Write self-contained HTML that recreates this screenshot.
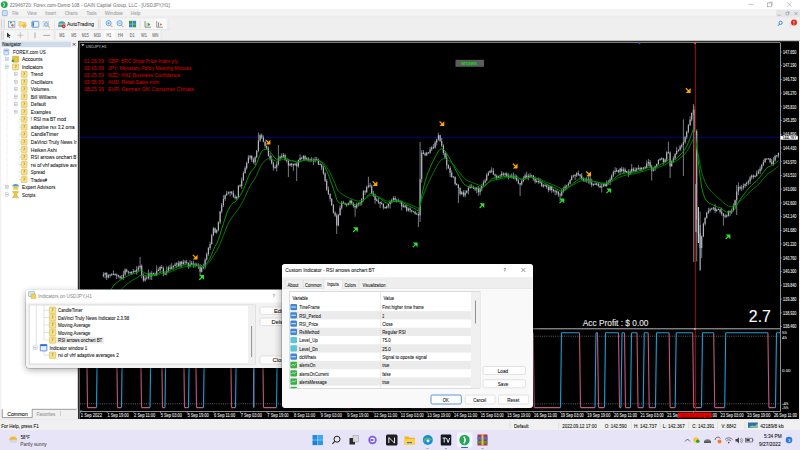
<!DOCTYPE html>
<html><head><meta charset="utf-8">
<style>
*{box-sizing:border-box}
html,body{margin:0;padding:0}
body{width:800px;height:450px;overflow:hidden;position:relative;background:#f0f0f0;font-family:"Liberation Sans",sans-serif}
.a{position:absolute}
svg text{white-space:pre;font-family:"Liberation Sans",sans-serif}
</style></head><body>
<svg class="a" style="left:0;top:0" width="800" height="450" viewBox="0 0 800 450">
<rect x="0" y="0" width="800" height="9.2" fill="#ffffff"/>
<circle cx="4.3" cy="4.6" r="3.4" fill="#22a84a"/><path d="M3.6 2.6q1.8 2 0 4" stroke="#fff" stroke-width="1" fill="none"/>
<text x="9.65" y="6.91" font-size="5.3" fill="#8c8c8c" textLength="160.10" lengthAdjust="spacingAndGlyphs" xml:space="preserve" stroke="#8c8c8c" stroke-width="0.1">22946720: Forex.com-Demo 108 - GAIN Capital Group, LLC - [USDJPY,H1]</text>
<path d="M748.5 4.4H753.5" stroke="#888" stroke-width="0.5"/><rect x="767.6" y="3" width="3.8" height="3.8" fill="none" stroke="#888" stroke-width="0.5"/><path d="M768.6 2.2H772.2V5.8" fill="none" stroke="#888" stroke-width="0.5"/><path d="M787 2.2L791.5 6.7M791.5 2.2L787 6.7" stroke="#888" stroke-width="0.5"/>
<rect x="0" y="9.2" width="800" height="7.8" fill="#f3f3f3"/>
<rect x="0" y="16.8" width="800" height="0.6" fill="#dadada"/>
<rect x="2.3" y="10.6" width="5" height="5" rx="0.6" fill="#cfe0f3" stroke="#5b8fd0" stroke-width="0.5"/>
<text x="12.15" y="15.37" font-size="5.2" fill="#a6a6a6" textLength="6.35" lengthAdjust="spacingAndGlyphs" xml:space="preserve" stroke="#a6a6a6" stroke-width="0.1">File</text>
<text x="27.15" y="15.37" font-size="5.2" fill="#a6a6a6" textLength="9.50" lengthAdjust="spacingAndGlyphs" xml:space="preserve" stroke="#a6a6a6" stroke-width="0.1">View</text>
<text x="45.25" y="15.37" font-size="5.2" fill="#a6a6a6" textLength="10.75" lengthAdjust="spacingAndGlyphs" xml:space="preserve" stroke="#a6a6a6" stroke-width="0.1">Insert</text>
<text x="64.65" y="15.37" font-size="5.2" fill="#a6a6a6" textLength="13.10" lengthAdjust="spacingAndGlyphs" xml:space="preserve" stroke="#a6a6a6" stroke-width="0.1">Charts</text>
<text x="86.50" y="15.37" font-size="5.2" fill="#a6a6a6" textLength="10.15" lengthAdjust="spacingAndGlyphs" xml:space="preserve" stroke="#a6a6a6" stroke-width="0.1">Tools</text>
<text x="104.65" y="15.37" font-size="5.2" fill="#a6a6a6" textLength="18.10" lengthAdjust="spacingAndGlyphs" xml:space="preserve" stroke="#a6a6a6" stroke-width="0.1">Window</text>
<text x="130.85" y="15.37" font-size="5.2" fill="#a6a6a6" textLength="9.50" lengthAdjust="spacingAndGlyphs" xml:space="preserve" stroke="#a6a6a6" stroke-width="0.1">Help</text>
<rect x="776" y="10" width="24" height="7" fill="#e6e6e6"/>
<path d="M777.5 15.2H781" stroke="#7a8ea8" stroke-width="0.5"/><rect x="786" y="12.4" width="2.6" height="2.6" fill="none" stroke="#7a8ea8" stroke-width="0.45"/><path d="M787 11.8H789.2V14" fill="none" stroke="#7a8ea8" stroke-width="0.45"/><path d="M794.5 12L797.5 15M797.5 12L794.5 15" stroke="#7a8ea8" stroke-width="0.6"/>
<rect x="0" y="17.4" width="800" height="23.4" fill="#efefef"/>
<rect x="5" y="18.6" width="92" height="10.6" fill="#f5f5f5"/>
<rect x="101" y="18.6" width="67" height="10.6" fill="#f5f5f5"/>
<rect x="5" y="29.9" width="48" height="10.4" fill="#f5f5f5"/>
<rect x="55" y="29.9" width="106" height="10.4" fill="#f5f5f5"/>
<rect x="104" y="30.3" width="10.5" height="10" fill="#fbfbfb"/>
<rect x="155" y="18.8" width="11" height="10.2" fill="#fbfbfb"/>
<rect x="4.3" y="30.4" width="9" height="9.6" fill="#f8f8f8"/>
<rect x="18" y="18.8" width="10.2" height="10.4" fill="#f8f8f8"/>
<path d="M1.5 19.5V28.5M4.3 19.5V28.5M1.5 31V39.5M3.4 31V39.5" stroke="#c0c0c0" stroke-width="0.6"/>
<path d="M54.5 20V28" stroke="#d4d4d4" stroke-width="0.5"/>
<path d="M140.2 20V28" stroke="#d4d4d4" stroke-width="0.5"/>
<path d="M28 31V39.5" stroke="#d4d4d4" stroke-width="0.5"/>
<path d="M55 31V39.5" stroke="#d4d4d4" stroke-width="0.5"/>
<rect x="8.3" y="21.2" width="6.6" height="6" fill="#eaf3fc" stroke="#4d8fd6" stroke-width="0.6"/><path d="M10 22.6h1.8M10.9 21.7v1.8" stroke="#2a9a2a" stroke-width="0.8"/><circle cx="12.5" cy="25.2" r="1.2" fill="#e96a3a"/>
<path d="M18.8 21.6h3l.8 1h3.4v3.4h-7.2z" fill="#f5e08a" stroke="#caa640" stroke-width="0.4"/><path d="M20.2 26.2v1.6" stroke="#9a8a60" stroke-width="0.5"/><path d="M24.3 23.6l.8 1.5 1.6.2-1.2 1.1.3 1.6-1.5-.8-1.5.8.3-1.6-1.2-1.1 1.6-.2z" fill="#f2c428" stroke="#c89a20" stroke-width="0.25"/>
<rect x="31.8" y="21.3" width="7" height="6" rx="0.6" fill="#e8f1fb" stroke="#3f82d0" stroke-width="0.7"/><rect x="32.4" y="22" width="1.6" height="4.6" fill="#3f82d0"/>
<rect x="43" y="21.2" width="5.8" height="5.2" fill="#e9eef5" stroke="#a9b8c8" stroke-width="0.4"/><circle cx="46.3" cy="24.3" r="1.8" fill="#bfe0f8" stroke="#3f82d0" stroke-width="0.5"/><path d="M47.6 25.6l2.2 2" stroke="#d9a020" stroke-width="0.9"/>
<path d="M58.2 24.5a3.6 3.2 0 0 1 7.2 0v2.6h-7.2z" fill="#3f9ad8"/><path d="M58.2 24.2h7.2" stroke="#f2c230" stroke-width="1.2"/><circle cx="63.6" cy="26.4" r="1.8" fill="#d92c2c"/><path d="M62.8 26.4h1.6" stroke="#fff" stroke-width="0.5"/>
<text x="67.05" y="25.82" font-size="5.6" fill="#2a2a2a" textLength="26.95" lengthAdjust="spacingAndGlyphs" xml:space="preserve" stroke="#2a2a2a" stroke-width="0.1">AutoTrading</text>
<path d="M98.5 19.5V28.5M100 19.5V28.5" stroke="#cfcfcf" stroke-width="0.5"/>
<circle cx="108.6" cy="23.2" r="2.6" fill="#cfe8fa" stroke="#3a86d2" stroke-width="0.6"/><path d="M107.4 23.2h2.4M108.6 22v2.4" stroke="#3a86d2" stroke-width="0.5"/><path d="M110.4 25l2 2" stroke="#d8a020" stroke-width="1"/>
<circle cx="119.6" cy="23.2" r="2.6" fill="#cfe8fa" stroke="#3a86d2" stroke-width="0.6"/><path d="M118.4 23.2h2.4" stroke="#3a86d2" stroke-width="0.5"/><path d="M121.4 25l2 2" stroke="#d8a020" stroke-width="1"/>
<rect x="129" y="20.8" width="3.4" height="3.1" fill="#2f9a3f"/><rect x="132.7" y="20.8" width="3.4" height="3.1" fill="#3a7fd0"/><rect x="129" y="24.2" width="3.4" height="3.1" fill="#3a7fd0"/><rect x="132.7" y="24.2" width="3.4" height="3.1" fill="#2f9a3f"/>
<path d="M145 21v6.2h6" stroke="#333" stroke-width="0.5" fill="none"/><path d="M147 22.5v4M148.3 23.2l1.8 1.3-1.8 1.3z" stroke="#2a9a2a" stroke-width="0.5" fill="#2a9a2a"/>
<path d="M156.7 21v6.2h6" stroke="#333" stroke-width="0.5" fill="none"/><path d="M158.6 22.3v4.4" stroke="#333" stroke-width="0.6"/><path d="M160.2 23.2l2 1.3-2 1.3z" fill="#e24a2a"/>
<path d="M7 32.4v5.2l1.3-1.2 1 1.9 0.7-.4-.9-1.8h1.8z" fill="#333"/>
<path d="M20.3 32.2v6.2M17.2 35.3h6.2" stroke="#999" stroke-width="0.5"/>
<path d="M35 32.5v5.6" stroke="#777" stroke-width="0.6"/><path d="M43.2 35.4h7" stroke="#777" stroke-width="0.6"/>
<text x="59.25" y="36.96" font-size="4.6" fill="#777" textLength="5.50" lengthAdjust="spacingAndGlyphs" xml:space="preserve" stroke="#777" stroke-width="0.1">M1</text>
<text x="71.25" y="36.96" font-size="4.6" fill="#777" textLength="5.20" lengthAdjust="spacingAndGlyphs" xml:space="preserve" stroke="#777" stroke-width="0.1">M5</text>
<text x="81.75" y="36.96" font-size="4.6" fill="#777" textLength="7.00" lengthAdjust="spacingAndGlyphs" xml:space="preserve" stroke="#777" stroke-width="0.1">M15</text>
<text x="93.75" y="36.96" font-size="4.6" fill="#777" textLength="7.00" lengthAdjust="spacingAndGlyphs" xml:space="preserve" stroke="#777" stroke-width="0.1">M30</text>
<text x="106.50" y="36.96" font-size="4.6" fill="#777" textLength="4.75" lengthAdjust="spacingAndGlyphs" xml:space="preserve" stroke="#777" stroke-width="0.1">H1</text>
<text x="117.75" y="36.96" font-size="4.6" fill="#777" textLength="5.50" lengthAdjust="spacingAndGlyphs" xml:space="preserve" stroke="#777" stroke-width="0.1">H4</text>
<text x="129.75" y="36.96" font-size="4.6" fill="#777" textLength="4.75" lengthAdjust="spacingAndGlyphs" xml:space="preserve" stroke="#777" stroke-width="0.1">D1</text>
<text x="141.00" y="36.96" font-size="4.6" fill="#777" textLength="5.95" lengthAdjust="spacingAndGlyphs" xml:space="preserve" stroke="#777" stroke-width="0.1">W1</text>
<text x="152.25" y="36.96" font-size="4.6" fill="#777" textLength="6.25" lengthAdjust="spacingAndGlyphs" xml:space="preserve" stroke="#777" stroke-width="0.1">MN</text>
<path d="M0 29.6H170M168 18.6V29.6M161 30V40.5" stroke="#dadada" stroke-width="0.5"/>
<circle cx="780.6" cy="22.8" r="1.6" fill="none" stroke="#2a6fd0" stroke-width="0.8"/><path d="M779.6 24L778 25.8" stroke="#2a6fd0" stroke-width="1"/>
<path d="M789 22.6h5v4h-3.5l-1.5 1.2z" fill="#e4e4e4"/><circle cx="794" cy="22.6" r="3" fill="#e02a20"/><path d="M794 20.8V23.4M794 24.2V24.8" stroke="#fff" stroke-width="0.7"/>
<rect x="78" y="40.8" width="722" height="378.2" fill="#000000"/>
<rect x="78" y="41" width="722" height="1" fill="#2c2c2c"/>
<rect x="78" y="42" width="702.5" height="1" fill="#7c7c7c"/>
<rect x="78" y="41" width="1" height="378" fill="#2c2c2c"/>
<rect x="79" y="42" width="1" height="377" fill="#5c5c5c"/>
<path d="M780.5 43V411.5H80" stroke="#b4b4b4" stroke-width="0.8" fill="none"/>
<path d="M80.3 328.8H780.4" stroke="#c8c8c8" stroke-width="0.9"/>
<rect x="799" y="40.8" width="1" height="378.2" fill="#ececec"/>
<path d="M80 137.6H780" stroke="#000098" stroke-width="0.9"/>
<path d="M80 336.2H780M80 403.8H780" stroke="#a0a0a0" stroke-width="0.6" stroke-dasharray="1 1.2"/>
<path d="M86.5 332.8L87.5 407.6M87.5 407.6H96.5M116.5 332.8L117.5 407.6M117.5 407.6H121.5M140.5 332.8L141.5 407.6M141.5 407.6H150.0M161.5 332.8L162.5 407.6M162.5 407.6H165.0M183.5 332.8L184.5 407.6M184.5 407.6H188.5M195.5 332.8L196.5 407.6M196.5 407.6H203.5M230.5 332.8L231.5 407.6M231.5 407.6H235.5M253.0 332.8L254.0 407.6M254.0 407.6H253.5M262.5 332.8L263.5 407.6M263.5 407.6H276.5M299.5 332.8L300.5 407.6M300.5 407.6H317.5M339.5 332.8L340.5 407.6M340.5 407.6H351.5M371.5 332.8L372.5 407.6M372.5 407.6H389.5M409.5 332.8L410.5 407.6M410.5 407.6H429.5M454.5 332.8L455.5 407.6M455.5 407.6H469.5M499.5 332.8L500.5 407.6M500.5 407.6H514.5M533.2 332.8L534.2 407.6M534.2 407.6H560.5M579.5 332.8L580.5 407.6M580.5 407.6H595.0M597.5 332.8L598.5 407.6M598.5 407.6H604.5M618.5 332.8L619.5 407.6M619.5 407.6H621.0M624.5 332.8L625.5 407.6M625.5 407.6H630.5M637.0 332.8L638.0 407.6M638.0 407.6H643.2M648.2 332.8L649.2 407.6M649.2 407.6H655.5M669.1 332.8L670.1 407.6M670.1 407.6H675.2M692.7 332.8L693.7 407.6M693.7 407.6H701.5M713.7 332.8L714.7 407.6M714.7 407.6H724.7M767.9 332.8L768.9 407.6M768.9 407.6H775.5" stroke="#c0577e" stroke-width="1.1" fill="none"/><path d="M80.0 332.8H86.5M96.5 407.6L97.5 332.8M97.5 332.8H116.5M121.5 407.6L122.5 332.8M122.5 332.8H140.5M150.0 407.6L151.0 332.8M151.0 332.8H161.5M165.0 407.6L166.0 332.8M166.0 332.8H183.5M188.5 407.6L189.5 332.8M189.5 332.8H195.5M203.5 407.6L204.5 332.8M204.5 332.8H230.5M235.5 407.6L236.5 332.8M236.5 332.8H253.0M253.5 407.6L254.5 332.8M254.5 332.8H262.5M276.5 407.6L277.5 332.8M277.5 332.8H299.5M317.5 407.6L318.5 332.8M318.5 332.8H339.5M351.5 407.6L352.5 332.8M352.5 332.8H371.5M389.5 407.6L390.5 332.8M390.5 332.8H409.5M429.5 407.6L430.5 332.8M430.5 332.8H454.5M469.5 407.6L470.5 332.8M470.5 332.8H499.5M514.5 407.6L515.5 332.8M515.5 332.8H533.2M560.5 407.6L561.5 332.8M561.5 332.8H579.5M595.0 407.6L596.0 332.8M596.0 332.8H597.5M604.5 407.6L605.5 332.8M605.5 332.8H618.5M621.0 407.6L622.0 332.8M622.0 332.8H624.5M630.5 407.6L631.5 332.8M631.5 332.8H637.0M643.2 407.6L644.2 332.8M644.2 332.8H648.2M655.5 407.6L656.5 332.8M656.5 332.8H669.1M675.2 407.6L676.2 332.8M676.2 332.8H692.7M701.5 407.6L702.5 332.8M702.5 332.8H713.7M724.7 407.6L725.7 332.8M725.7 332.8H767.9M775.5 407.6L776.5 332.8M776.5 332.8H780" stroke="#1c9fd6" stroke-width="1.1" fill="none"/>
<path d="M103.4 272.2V277.5M105.1 272.3V278.4M106.7 272.2V280.0M108.4 274.2V278.4M110.1 274.3V277.7M111.7 273.2V275.6M113.4 270.4V275.3M115.1 273.5V275.9M116.7 273.6V279.0M118.4 274.7V277.7M120.1 275.4V279.5M121.7 275.1V279.1M123.4 270.7V279.7M125.1 268.3V275.9M126.7 268.6V272.6M128.4 270.7V274.5M130.1 271.5V274.1M131.7 271.1V275.0M133.4 269.0V272.9M135.1 270.3V272.0M136.7 266.2V274.6M138.4 265.7V271.5M140.1 257.0V269.6M141.7 264.4V278.3M143.4 273.4V281.9M145.1 275.1V281.5M146.7 276.1V279.6M148.4 269.4V279.5M150.1 272.2V279.7M151.7 271.1V280.0M153.4 272.5V274.7M155.1 272.6V276.1M156.7 265.3V276.0M158.4 267.8V271.2M160.1 265.8V273.0M161.7 264.9V269.1M163.4 266.5V276.2M165.1 272.3V275.2M166.7 266.5V275.5M168.4 265.7V272.1M170.1 264.6V269.7M171.7 263.2V269.2M173.4 265.3V269.6M175.1 262.7V266.7M176.7 262.2V268.1M178.4 260.7V267.1M180.1 261.3V267.6M181.7 260.7V267.4M183.4 259.7V264.8M185.1 260.2V264.9M186.7 259.8V263.9M188.4 262.2V268.9M190.1 260.2V267.8M191.7 261.0V264.8M193.4 260.7V267.8M195.1 262.5V267.7M196.7 262.8V266.2M198.4 263.2V269.0M200.1 263.9V276.0M201.7 265.0V272.5M203.4 263.6V269.4M205.1 258.4V269.3M206.7 252.5V260.6M208.4 246.8V255.8M210.1 241.7V250.1M211.7 233.8V244.7M213.4 227.1V236.1M215.1 227.5V233.3M216.7 229.3V233.7M218.4 221.4V231.4M220.1 210.8V224.2M221.7 203.0V213.4M223.4 195.2V207.0M225.1 194.4V201.0M226.7 191.0V195.9M228.4 191.3V194.3M230.1 191.3V196.1M231.7 191.0V194.8M233.4 190.4V197.7M235.1 194.6V199.6M236.7 195.9V199.6M238.4 185.2V198.0M240.1 184.1V187.2M241.7 177.6V188.8M243.4 171.4V180.9M245.1 166.2V173.8M246.7 161.6V169.6M248.4 155.2V163.6M250.1 155.0V159.7M251.7 155.2V161.8M253.4 157.7V163.8M255.1 156.2V165.4M256.7 150.1V158.3M258.4 132.5V152.3M260.1 133.9V142.1M261.7 133.4V139.0M263.4 135.3V142.3M265.1 141.2V147.9M266.7 145.3V149.4M268.4 146.5V156.6M270.1 153.2V160.7M271.7 155.4V164.7M273.4 161.6V170.6M275.1 165.2V168.9M276.7 161.7V171.4M278.4 145.0V165.7M280.1 155.5V160.1M281.7 153.4V158.5M283.4 153.0V157.6M285.1 153.8V160.8M286.7 159.1V162.6M288.4 159.1V177.0M290.1 163.0V166.4M291.7 162.9V167.1M293.4 163.6V170.9M295.1 163.1V166.0M296.7 162.4V181.0M298.4 159.4V167.6M300.1 154.3V161.8M301.7 156.8V159.4M303.4 155.1V160.1M305.1 154.9V159.9M306.7 157.1V160.3M308.4 157.1V161.6M310.1 158.3V162.4M311.7 157.1V161.8M313.4 158.3V165.1M315.1 156.8V162.5M316.7 156.9V160.3M318.4 158.5V165.0M320.1 162.4V165.3M321.7 163.7V170.1M323.4 165.8V174.8M325.1 172.2V182.0M326.7 179.1V191.1M328.4 186.5V195.0M330.1 193.3V201.5M331.7 198.2V206.2M333.4 204.1V213.6M335.1 211.3V216.8M336.7 213.5V234.0M338.4 213.8V226.4M340.1 205.4V215.9M341.7 200.8V209.7M343.4 200.8V203.9M345.1 202.4V205.0M346.7 203.4V206.7M348.4 202.6V205.5M350.1 199.6V204.7M351.7 199.5V204.2M353.4 202.3V207.6M355.1 204.9V216.7M356.7 202.6V208.7M358.4 202.4V206.6M360.1 201.6V205.9M361.7 198.0V205.4M363.4 190.1V201.5M365.1 190.1V194.9M366.7 185.7V192.8M368.4 176.7V188.2M370.1 182.7V187.5M371.7 184.5V194.3M373.4 190.7V196.9M375.1 193.6V203.7M376.7 198.3V201.3M378.4 197.7V203.8M380.1 201.6V207.9M381.7 201.2V204.7M383.4 203.3V209.4M385.1 206.6V208.6M386.7 205.3V208.8M388.4 203.6V208.3M390.1 200.4V208.5M391.7 198.8V203.5M393.4 196.3V201.7M395.1 195.9V201.8M396.7 198.7V202.6M398.4 198.5V202.2M400.1 200.2V203.8M401.7 200.7V210.4M403.4 204.0V207.6M405.1 204.6V208.2M406.7 205.0V211.7M408.4 207.5V211.6M410.1 207.3V212.5M411.7 209.7V212.7M413.4 210.7V212.6M415.1 210.7V214.8M416.7 212.7V214.6M418.4 211.8V227.0M420.1 142.0V222.0M421.7 150.2V182.7M423.4 150.0V154.3M425.1 152.4V156.3M426.7 151.8V155.9M428.4 152.1V153.9M430.1 147.0V153.8M431.7 146.2V150.9M433.4 144.1V149.0M435.1 140.8V148.6M436.7 138.7V145.5M438.4 132.7V140.6M440.1 134.7V141.9M441.7 138.0V147.1M443.4 144.2V154.9M445.1 151.0V158.7M446.7 153.6V169.7M448.4 164.2V169.0M450.1 166.2V177.1M451.7 170.3V177.8M453.4 176.0V178.2M455.1 176.3V185.5M456.7 183.0V185.6M458.4 183.9V203.0M460.1 187.2V195.6M461.7 191.0V194.9M463.4 190.2V196.9M465.1 190.3V197.4M466.7 190.0V193.6M468.4 186.4V194.3M470.1 184.3V188.8M471.7 184.2V188.2M473.4 185.7V189.2M475.1 187.5V191.1M476.7 187.0V193.2M478.4 186.0V195.8M480.1 186.6V195.3M481.7 184.2V191.2M483.4 180.4V186.6M485.1 178.7V183.7M486.7 173.2V181.2M488.4 171.2V176.0M490.1 169.9V173.3M491.7 167.4V172.7M493.4 168.2V175.1M495.1 173.5V177.9M496.7 174.5V180.1M498.4 175.6V178.3M500.1 174.3V178.6M501.7 171.1V177.0M503.4 172.4V176.1M505.1 172.7V176.8M506.7 172.3V177.0M508.4 173.3V179.5M510.1 174.5V177.8M511.7 173.5V178.4M513.4 172.6V179.1M515.1 174.1V179.7M516.7 175.0V181.5M518.4 179.1V184.2M520.1 182.9V196.0M521.7 180.0V185.7M523.4 176.2V182.3M525.1 173.4V179.1M526.7 171.7V178.7M528.4 173.8V180.2M530.1 173.1V177.8M531.7 174.6V176.9M533.4 174.8V180.6M535.1 176.4V183.6M536.7 178.3V182.8M538.4 177.6V183.8M540.1 178.2V183.7M541.7 181.2V187.1M543.4 183.9V187.7M545.1 183.6V186.8M546.7 184.5V188.9M548.4 184.8V192.2M550.1 185.6V191.1M551.7 185.5V192.8M553.4 188.7V192.4M555.1 189.7V195.3M556.7 190.1V194.9M558.4 191.1V196.9M560.1 192.7V201.0M561.7 189.2V196.5M563.4 186.6V192.8M565.1 184.5V190.8M566.7 184.8V189.5M568.4 182.2V186.8M570.1 179.2V184.5M571.7 175.0V180.5M573.4 174.5V177.6M575.1 174.1V180.0M576.7 172.1V177.1M578.4 170.5V175.9M580.1 174.2V178.0M581.7 173.1V180.3M583.4 177.3V181.7M585.1 177.7V181.8M586.7 177.1V182.8M588.4 174.7V183.7M590.1 175.7V184.6M591.7 178.5V187.1M593.4 183.7V186.2M595.1 182.5V185.0M596.7 182.8V185.6M598.4 182.2V187.3M600.1 183.7V188.1M601.7 183.9V192.5M603.4 183.2V186.9M605.1 183.3V186.8M606.7 180.3V186.9M608.4 179.9V184.7M610.1 177.5V185.2M611.7 174.3V180.4M613.4 170.4V177.0M615.1 167.2V174.4M616.7 167.9V171.8M618.4 169.8V173.4M620.1 167.9V175.2M621.7 166.7V172.4M623.4 167.3V173.2M625.1 167.6V173.0M626.7 171.0V173.1M628.4 169.3V176.9M630.1 169.5V174.9M631.7 164.0V173.3M633.4 167.4V171.9M635.1 167.3V172.1M636.7 167.6V171.8M638.4 165.2V169.9M640.1 166.9V171.5M641.7 167.0V171.2M643.4 167.2V169.0M645.1 166.0V168.8M646.7 160.5V168.2M648.4 159.0V166.0M650.1 160.0V167.0M651.7 164.8V180.5M653.4 167.4V171.6M655.1 165.6V170.9M656.7 163.6V167.5M658.4 159.3V164.9M660.1 158.0V161.0M661.7 157.3V160.1M663.4 157.9V164.6M665.1 158.5V162.8M666.7 151.2V161.8M668.4 141.7V153.9M670.1 151.3V178.0M671.7 160.6V166.8M673.4 156.3V163.0M675.1 152.9V159.9M676.7 146.8V154.7M678.4 149.2V151.9M680.1 145.1V151.1M681.7 143.5V148.4M683.4 119.4V176.0M685.1 135.9V143.7M686.7 130.8V139.2M688.4 124.0V133.2M690.1 116.3V126.0M691.7 112.5V121.5M693.4 103.9V115.1M695.1 108.7V131.8M696.7 129.3V261.5M698.4 217.8V235.7M700.1 211.6V270.8M701.7 235.5V258.0M703.4 222.5V237.1M705.1 217.1V225.7M706.7 211.8V218.7M708.4 207.8V214.1M710.1 207.7V212.5M711.7 207.8V210.1M713.4 206.8V210.3M715.1 204.0V213.0M716.7 208.8V211.6M718.4 208.3V210.1M720.1 208.7V213.4M721.7 207.5V215.6M723.4 212.9V225.7M725.1 213.9V218.3M726.7 214.5V217.6M728.4 210.5V216.6M730.1 210.2V216.2M731.7 208.6V213.9M733.4 203.2V211.3M735.1 199.6V208.7M736.7 185.0V215.0M738.4 182.3V195.2M740.1 185.8V190.3M741.7 185.0V190.9M743.4 183.5V189.7M745.1 183.4V187.9M746.7 181.5V186.3M748.4 179.6V185.0M750.1 175.8V184.0M751.7 174.7V179.4M753.4 174.4V178.9M755.1 174.9V177.6M756.7 170.6V176.6M758.4 169.4V174.2M760.1 166.5V174.2M761.7 164.0V170.5M763.4 159.6V166.1M765.1 158.0V163.2M766.7 158.3V160.0M768.4 158.0V159.8M770.1 157.9V163.3M771.7 158.7V165.1M773.4 157.0V165.5M775.1 154.7V161.7M776.7 155.0V157.5M778.4 152.4V157.9" stroke="#767c84" stroke-width="1.0" fill="none"/>
<path d="M103.4 274.5V276.0M105.1 273.0V274.5M106.7 273.0V277.4M108.4 275.3V277.4M110.1 274.6V275.7M111.7 274.3V275.4M113.4 273.8V275.1M115.1 273.8V275.0M116.7 274.6V275.4M118.4 275.0V276.6M120.1 276.2V278.0M121.7 277.4V278.4M123.4 274.6V277.8M125.1 269.8V274.6M126.7 269.8V271.8M128.4 271.4V272.4M130.1 272.0V273.0M131.7 271.9V273.4M133.4 271.1V272.3M135.1 270.7V271.9M136.7 269.6V271.5M138.4 267.5V269.6M140.1 265.7V267.5M141.7 265.7V275.5M143.4 275.5V280.6M145.1 278.2V280.6M146.7 277.8V278.6M148.4 273.5V278.2M150.1 273.5V276.6M151.7 273.4V276.6M153.4 273.0V274.2M155.1 273.8V275.2M156.7 270.5V275.2M158.4 269.8V270.9M160.1 266.9V270.2M161.7 266.9V268.1M163.4 268.1V274.0M165.1 272.8V274.4M166.7 270.7V273.2M168.4 267.4V270.7M170.1 267.4V268.7M171.7 266.7V268.7M173.4 265.7V267.1M175.1 264.4V266.1M176.7 263.2V264.4M178.4 263.2V266.1M180.1 261.8V266.1M181.7 261.8V263.9M183.4 262.2V263.9M185.1 261.6V262.6M186.7 262.0V263.0M188.4 263.0V266.2M190.1 264.1V266.2M191.7 263.0V264.5M193.4 263.4V264.6M195.1 264.2V265.4M196.7 264.6V265.8M198.4 265.0V266.5M200.1 266.1V271.8M201.7 267.4V271.8M203.4 266.6V267.4M205.1 259.8V266.6M206.7 253.9V259.8M208.4 248.0V253.9M210.1 244.0V248.0M211.7 235.2V244.0M213.4 228.3V235.2M215.1 228.3V232.5M216.7 230.0V232.5M218.4 222.3V230.0M220.1 211.6V222.3M221.7 205.0V211.6M223.4 198.9V205.0M225.1 195.2V198.9M226.7 193.4V195.2M228.4 192.3V193.4M230.1 191.7V192.7M231.7 191.7V193.3M233.4 192.9V196.7M235.1 196.7V198.0M236.7 197.0V198.4M238.4 185.8V197.4M240.1 185.4V186.4M241.7 180.3V186.0M243.4 173.0V180.3M245.1 168.2V173.0M246.7 162.9V168.2M248.4 157.5V162.9M250.1 156.1V157.5M251.7 156.1V159.6M253.4 159.6V162.2M255.1 157.3V162.2M256.7 150.7V157.3M258.4 140.4V150.7M260.1 135.3V140.4M261.7 135.3V137.4M263.4 137.4V141.8M265.1 141.8V146.1M266.7 146.1V148.4M268.4 148.4V155.7M270.1 155.7V159.1M271.7 159.1V163.3M273.4 163.3V167.5M275.1 167.1V168.0M276.7 164.2V167.6M278.4 158.8V164.2M280.1 156.8V158.8M281.7 156.1V157.2M283.4 155.0V156.5M285.1 155.0V159.8M286.7 159.8V160.8M288.4 160.8V165.6M290.1 164.0V165.6M291.7 163.6V164.9M293.4 164.1V165.4M295.1 163.8V165.0M296.7 163.8V166.3M298.4 160.1V166.3M300.1 158.1V160.1M301.7 157.7V158.8M303.4 155.9V158.4M305.1 155.9V159.2M306.7 158.3V159.6M308.4 158.7V160.5M310.1 159.4V160.9M311.7 159.4V160.9M313.4 160.5V161.3M315.1 159.3V161.3M316.7 158.9V160.2M318.4 159.8V164.4M320.1 164.0V165.1M321.7 164.7V167.5M323.4 167.5V173.6M325.1 173.6V180.8M326.7 180.8V189.4M328.4 189.4V194.1M330.1 194.1V198.8M331.7 198.8V204.9M333.4 204.9V212.8M335.1 212.8V215.4M336.7 215.4V225.4M338.4 214.9V225.4M340.1 207.8V214.9M341.7 202.4V207.8M343.4 202.4V203.3M345.1 203.3V204.3M346.7 203.9V205.3M348.4 203.1V204.9M350.1 200.7V203.1M351.7 200.7V203.5M353.4 203.5V206.0M355.1 206.0V207.5M356.7 204.3V207.5M358.4 203.0V204.3M360.1 202.4V203.4M361.7 199.3V202.8M363.4 191.2V199.3M365.1 191.2V192.2M366.7 187.1V192.2M368.4 185.6V187.1M370.1 185.2V186.6M371.7 186.2V193.6M373.4 193.6V195.8M375.1 195.8V200.0M376.7 199.6V201.0M378.4 200.6V202.4M380.1 202.0V203.4M381.7 203.0V204.1M383.4 204.1V207.5M385.1 207.1V208.3M386.7 206.3V207.9M388.4 204.1V206.3M390.1 201.4V204.1M391.7 200.1V201.4M393.4 197.9V200.1M395.1 197.9V200.1M396.7 200.1V201.5M398.4 200.5V201.9M400.1 200.9V201.8M401.7 201.8V206.6M403.4 205.6V207.0M405.1 205.6V207.2M406.7 206.8V210.6M408.4 208.5V210.6M410.1 208.5V210.2M411.7 210.2V211.6M413.4 211.2V212.1M415.1 211.7V213.8M416.7 213.4V214.4M418.4 214.0V215.4M420.1 179.1V215.4M421.7 152.8V179.1M423.4 152.4V153.9M425.1 153.5V155.2M426.7 152.7V155.2M428.4 152.3V153.2M430.1 149.4V152.8M431.7 147.6V149.4M433.4 147.1V148.0M435.1 142.6V147.5M436.7 139.4V142.6M438.4 135.3V139.4M440.1 135.3V141.0M441.7 141.0V145.6M443.4 145.6V153.0M445.1 153.0V157.6M446.7 157.6V165.3M448.4 165.3V168.1M450.1 168.1V172.7M451.7 172.7V176.9M453.4 176.5V177.3M455.1 176.9V184.0M456.7 184.0V185.1M458.4 185.1V188.0M460.1 188.0V193.9M461.7 192.2V193.9M463.4 192.2V195.5M465.1 192.7V195.5M466.7 191.0V192.7M468.4 188.1V191.0M470.1 186.7V188.1M471.7 186.7V187.6M473.4 187.6V188.6M475.1 188.2V189.6M476.7 187.9V189.2M478.4 187.9V192.2M480.1 189.2V192.2M481.7 186.0V189.2M483.4 182.5V186.0M485.1 180.4V182.5M486.7 174.9V180.4M488.4 172.8V174.9M490.1 171.0V172.8M491.7 170.6V171.7M493.4 171.3V174.5M495.1 174.5V175.7M496.7 175.7V177.7M498.4 176.2V177.7M500.1 175.4V176.2M501.7 173.4V175.4M503.4 173.4V174.8M505.1 173.5V174.8M506.7 173.5V176.1M508.4 175.7V177.2M510.1 176.4V177.6M511.7 175.8V177.2M513.4 175.8V178.4M515.1 176.3V178.4M516.7 176.3V180.6M518.4 180.6V183.5M520.1 183.1V184.7M521.7 180.9V184.3M523.4 177.9V180.9M525.1 175.5V177.9M526.7 175.5V177.0M528.4 176.0V177.4M530.1 175.5V176.8M531.7 175.4V176.3M533.4 175.8V178.9M535.1 178.9V181.5M536.7 181.1V181.9M538.4 181.1V181.9M540.1 181.5V182.7M541.7 182.7V186.2M543.4 185.2V186.6M545.1 185.0V186.0M546.7 185.4V186.9M548.4 186.9V190.1M550.1 186.2V190.1M551.7 186.2V189.9M553.4 189.5V190.9M555.1 190.5V191.5M556.7 191.1V192.5M558.4 192.1V194.5M560.1 194.5V195.5M561.7 191.2V195.5M563.4 189.3V191.2M565.1 186.4V189.3M566.7 185.5V186.4M568.4 183.8V185.5M570.1 179.9V183.8M571.7 176.6V179.9M573.4 175.4V176.6M575.1 175.0V175.9M576.7 173.2V175.5M578.4 173.2V174.7M580.1 174.3V175.9M581.7 175.5V179.0M583.4 179.0V180.9M585.1 180.4V181.3M586.7 179.2V180.8M588.4 178.8V179.8M590.1 179.4V182.5M591.7 182.5V184.7M593.4 183.8V185.1M595.1 183.8V184.7M596.7 183.6V184.7M598.4 184.0V186.1M600.1 186.1V187.5M601.7 186.2V187.5M603.4 184.1V186.2M605.1 184.1V186.1M606.7 182.2V186.1M608.4 181.8V182.8M610.1 179.5V182.4M611.7 175.4V179.5M613.4 172.0V175.4M615.1 171.1V172.0M616.7 169.9V171.5M618.4 170.3V172.1M620.1 168.7V172.1M621.7 168.7V171.1M623.4 169.5V171.1M625.1 169.5V172.1M626.7 171.3V172.5M628.4 171.7V173.6M630.1 171.4V173.6M631.7 168.8V171.4M633.4 168.8V170.8M635.1 169.8V171.2M636.7 168.4V170.2M638.4 168.0V168.9M640.1 168.1V169.5M641.7 168.0V169.1M643.4 167.6V168.5M645.1 167.3V168.5M646.7 163.6V167.7M648.4 161.9V163.6M650.1 161.9V166.5M651.7 166.5V170.8M653.4 168.5V170.8M655.1 166.2V168.5M656.7 164.1V166.2M658.4 160.1V164.1M660.1 158.9V160.1M661.7 158.2V159.3M663.4 158.6V162.0M665.1 159.5V162.0M666.7 152.3V159.5M668.4 151.9V152.9M670.1 152.5V166.2M671.7 161.2V166.2M673.4 158.6V161.2M675.1 154.0V158.6M676.7 150.9V154.0M678.4 150.1V150.9M680.1 146.6V150.1M681.7 145.1V146.6M683.4 142.3V145.1M685.1 137.2V142.3M686.7 131.4V137.2M688.4 125.3V131.4M690.1 119.6V125.3M691.7 113.1V119.6M693.4 109.9V113.1M695.1 109.9V131.1M696.7 131.1V219.5M698.4 219.5V233.6M700.1 233.6V247.9M701.7 236.2V247.9M703.4 223.7V236.2M705.1 217.9V223.7M706.7 212.7V217.9M708.4 210.8V212.7M710.1 209.3V210.8M711.7 208.4V209.3M713.4 207.4V208.8M715.1 207.8V211.0M716.7 209.4V211.0M718.4 209.0V209.8M720.1 209.4V211.8M721.7 211.8V213.8M723.4 213.8V215.9M725.1 215.5V216.8M726.7 215.3V216.8M728.4 211.3V215.7M730.1 211.3V212.6M731.7 210.7V212.6M733.4 206.1V210.7M735.1 200.2V206.1M736.7 191.6V200.2M738.4 186.9V191.6M740.1 186.9V188.4M741.7 187.6V188.4M743.4 186.0V187.6M745.1 183.9V186.0M746.7 182.8V183.9M748.4 181.2V182.8M750.1 177.6V181.2M751.7 175.5V177.6M753.4 175.5V177.0M755.1 176.1V177.0M756.7 173.2V176.1M758.4 171.2V173.2M760.1 168.7V171.2M761.7 165.1V168.7M763.4 161.9V165.1M765.1 158.8V161.9M766.7 158.4V159.3M768.4 158.4V159.3M770.1 158.8V162.1M771.7 162.1V164.1M773.4 160.4V164.1M775.1 155.9V160.4M776.7 155.3V156.3M778.4 153.0V155.7" stroke="#b4bac2" stroke-width="1.1" fill="none"/>
<path d="M693.8 106V262" stroke="#8a9098" stroke-width="1"/><path d="M698.4 207V243" stroke="#d0d4d8" stroke-width="1.1"/><path d="M700.2 225V270" stroke="#9aa0a8" stroke-width="1"/>
<polyline points="103.4,310.4 105.1,304.1 106.7,299.0 108.4,294.8 110.1,291.4 111.7,288.4 113.4,286.0 115.1,284.0 116.7,282.6 118.4,281.4 120.1,280.3 121.7,279.3 123.4,278.3 125.1,277.3 126.7,276.4 128.4,275.5 130.1,274.7 131.7,274.1 133.4,273.7 135.1,273.3 136.7,272.7 138.4,271.7 140.1,270.5 141.7,270.9 143.4,272.1 145.1,273.1 146.7,273.7 148.4,274.1 150.1,274.4 151.7,274.5 153.4,274.6 155.1,274.6 156.7,274.1 158.4,273.4 160.1,272.3 161.7,271.8 163.4,271.7 165.1,271.9 166.7,271.8 168.4,271.3 170.1,270.5 171.7,269.6 173.4,268.7 175.1,267.9 176.7,267.1 178.4,266.5 180.1,265.8 181.7,265.4 183.4,265.1 185.1,264.9 186.7,264.8 188.4,264.8 190.1,264.8 191.7,264.8 193.4,264.8 195.1,264.7 196.7,265.0 198.4,265.7 200.1,266.5 201.7,266.8 203.4,266.5 205.1,265.4 206.7,263.3 208.4,260.8 210.1,258.1 211.7,254.2 213.4,249.8 215.1,246.3 216.7,243.5 218.4,239.6 220.1,234.5 221.7,229.1 223.4,223.6 225.1,218.4 226.7,213.5 228.4,209.6 230.1,206.6 231.7,204.4 233.4,202.9 235.1,201.9 236.7,200.5 238.4,198.0 240.1,195.6 241.7,192.9 243.4,189.4 245.1,185.4 246.7,180.8 248.4,176.6 250.1,173.1 251.7,170.7 253.4,168.9 255.1,166.7 256.7,163.5 258.4,158.8 260.1,154.5 261.7,151.4 263.4,149.8 265.1,149.3 266.7,149.3 268.4,150.2 270.1,151.9 271.7,153.9 273.4,156.1 275.1,158.2 276.7,159.4 278.4,159.2 280.1,158.7 281.7,157.9 283.4,157.4 285.1,157.5 286.7,158.3 288.4,159.7 290.1,160.4 291.7,160.7 293.4,161.1 295.1,161.7 296.7,162.5 298.4,162.5 300.1,161.8 301.7,161.0 303.4,160.1 305.1,159.8 306.7,159.9 308.4,160.1 310.1,160.3 311.7,160.4 313.4,160.4 315.1,160.2 316.7,160.2 318.4,160.5 320.1,161.3 321.7,162.5 323.4,164.2 325.1,167.2 326.7,171.0 328.4,174.8 330.1,179.1 331.7,183.9 333.4,188.8 335.1,193.7 336.7,199.5 338.4,202.4 340.1,203.2 341.7,203.3 343.4,203.6 345.1,203.9 346.7,204.1 348.4,204.1 350.1,203.9 351.7,204.0 353.4,204.3 355.1,204.7 356.7,204.7 358.4,204.2 360.1,203.4 361.7,202.3 363.4,200.8 365.1,199.0 366.7,196.9 368.4,194.8 370.1,193.7 371.7,193.5 373.4,194.0 375.1,194.9 376.7,196.1 378.4,197.3 380.1,198.4 381.7,199.6 383.4,201.0 385.1,202.4 386.7,203.1 388.4,203.2 390.1,202.9 391.7,202.3 393.4,201.7 395.1,201.3 396.7,201.1 398.4,201.2 400.1,201.6 401.7,202.3 403.4,203.0 405.1,203.9 406.7,204.8 408.4,205.6 410.1,206.4 411.7,207.3 413.4,208.1 415.1,208.9 416.7,210.0 418.4,211.3 420.1,205.4 421.7,195.7 423.4,188.1 425.1,181.7 426.7,176.3 428.4,171.7 430.1,167.6 431.7,164.0 433.4,160.6 435.1,157.4 436.7,154.2 438.4,151.0 440.1,149.3 441.7,148.9 443.4,149.5 445.1,151.1 446.7,153.6 448.4,156.4 450.1,159.2 451.7,162.2 453.4,165.4 455.1,168.7 456.7,171.9 458.4,175.0 460.1,178.0 461.7,180.8 463.4,183.4 465.1,185.0 466.7,186.0 468.4,186.6 470.1,186.9 471.7,187.0 473.4,187.2 475.1,187.5 476.7,187.9 478.4,188.3 480.1,188.6 481.7,188.2 483.4,187.3 485.1,185.9 486.7,184.3 488.4,182.4 490.1,180.3 491.7,179.1 493.4,178.4 495.1,178.2 496.7,178.0 498.4,177.7 500.1,177.4 501.7,177.1 503.4,176.8 505.1,176.4 506.7,176.3 508.4,176.2 510.1,176.2 511.7,176.3 513.4,176.4 515.1,176.6 516.7,177.2 518.4,178.0 520.1,179.1 521.7,179.5 523.4,179.5 525.1,179.1 526.7,178.4 528.4,177.6 530.1,177.3 531.7,177.2 533.4,177.5 535.1,178.0 536.7,178.6 538.4,179.5 540.1,180.5 541.7,181.5 543.4,182.4 545.1,183.3 546.7,184.2 548.4,185.0 550.1,185.9 551.7,186.6 553.4,187.4 555.1,188.1 556.7,189.0 558.4,190.0 560.1,191.0 561.7,191.3 563.4,190.9 565.1,190.0 566.7,188.9 568.4,187.6 570.1,186.2 571.7,184.7 573.4,183.2 575.1,181.8 576.7,180.5 578.4,179.3 580.1,178.7 581.7,178.5 583.4,178.7 585.1,179.1 586.7,179.5 588.4,180.0 590.1,180.4 591.7,180.9 593.4,181.3 595.1,181.8 596.7,182.2 598.4,182.7 600.1,183.2 601.7,183.7 603.4,183.9 605.1,183.8 606.7,183.4 608.4,182.8 610.1,182.0 611.7,180.9 613.4,179.4 615.1,177.7 616.7,176.3 618.4,175.3 620.1,174.5 621.7,173.8 623.4,173.4 625.1,173.0 626.7,172.8 628.4,172.7 630.1,172.7 631.7,172.5 633.4,172.2 635.1,171.9 636.7,171.5 638.4,171.0 640.1,170.5 641.7,170.1 643.4,169.6 645.1,169.1 646.7,168.2 648.4,167.2 650.1,167.4 651.7,167.8 653.4,167.8 655.1,167.5 656.7,166.8 658.4,165.8 660.1,164.7 661.7,163.9 663.4,163.4 665.1,162.6 666.7,161.0 668.4,159.7 670.1,160.8 671.7,161.1 673.4,160.6 675.1,159.5 676.7,158.0 678.4,156.5 680.1,155.0 681.7,153.3 683.4,151.4 685.1,149.0 686.7,146.1 688.4,142.5 690.1,138.3 691.7,133.6 693.4,129.1 695.1,129.7 696.7,146.0 698.4,161.7 700.1,176.8 701.7,187.4 703.4,194.2 705.1,198.4 706.7,201.0 708.4,202.6 710.1,203.6 711.7,204.3 713.4,205.1 715.1,206.0 716.7,206.7 718.4,207.3 720.1,207.8 721.7,208.9 723.4,210.3 725.1,211.4 726.7,212.0 728.4,212.2 730.1,212.0 731.7,211.6 733.4,210.7 735.1,208.5 736.7,205.3 738.4,202.3 740.1,199.7 741.7,197.4 743.4,195.1 745.1,192.9 746.7,190.7 748.4,188.7 750.1,186.8 751.7,185.2 753.4,183.6 755.1,182.1 756.7,180.7 758.4,179.0 760.1,176.9 761.7,174.6 763.4,172.3 765.1,170.1 766.7,168.1 768.4,166.8 770.1,166.2 771.7,165.7 773.4,164.7 775.1,163.3 776.7,161.9 778.4,160.6" fill="none" stroke="#00a800" stroke-width="0.9"/>
<polyline points="103.4,320.7 105.1,316.0 106.7,311.8 108.4,308.0 110.1,304.7 111.7,301.6 113.4,298.7 115.1,296.3 116.7,294.1 118.4,292.3 120.1,290.5 121.7,288.8 123.4,287.2 125.1,285.7 126.7,284.3 128.4,283.0 130.1,281.7 131.7,280.6 133.4,279.7 135.1,278.9 136.7,277.9 138.4,276.8 140.1,275.6 141.7,275.2 143.4,275.5 145.1,275.7 146.7,275.8 148.4,275.8 150.1,275.8 151.7,275.7 153.4,275.6 155.1,275.5 156.7,275.2 158.4,274.6 160.1,273.9 161.7,273.4 163.4,273.2 165.1,273.2 166.7,272.9 168.4,272.5 170.1,272.0 171.7,271.3 173.4,270.6 175.1,269.9 176.7,269.3 178.4,268.6 180.1,268.1 181.7,267.6 183.4,267.1 185.1,266.8 186.7,266.6 188.4,266.4 190.1,266.2 191.7,266.1 193.4,265.9 195.1,265.8 196.7,265.8 198.4,266.1 200.1,266.6 201.7,266.7 203.4,266.6 205.1,265.9 206.7,264.7 208.4,263.1 210.1,261.2 211.7,258.7 213.4,255.7 215.1,253.0 216.7,250.7 218.4,247.7 220.1,243.9 221.7,239.7 223.4,235.4 225.1,231.2 226.7,227.0 228.4,223.3 230.1,220.2 231.7,217.5 233.4,215.2 235.1,213.3 236.7,211.3 238.4,208.7 240.1,206.2 241.7,203.5 243.4,200.4 245.1,196.9 246.7,193.0 248.4,189.3 250.1,186.0 251.7,183.2 253.4,180.8 255.1,178.3 256.7,175.3 258.4,171.3 260.1,167.5 261.7,164.3 263.4,162.1 265.1,160.5 266.7,159.3 268.4,158.8 270.1,158.8 271.7,159.3 273.4,160.0 275.1,160.8 276.7,161.2 278.4,160.9 280.1,160.4 281.7,159.8 283.4,159.3 285.1,159.1 286.7,159.5 288.4,160.1 290.1,160.5 291.7,160.7 293.4,160.9 295.1,161.3 296.7,161.8 298.4,161.8 300.1,161.5 301.7,161.1 303.4,160.5 305.1,160.3 306.7,160.3 308.4,160.4 310.1,160.5 311.7,160.5 313.4,160.5 315.1,160.4 316.7,160.3 318.4,160.5 320.1,161.0 321.7,161.7 323.4,162.8 325.1,164.7 326.7,167.2 328.4,169.8 330.1,172.7 331.7,176.2 333.4,179.8 335.1,183.7 336.7,188.0 338.4,190.9 340.1,192.6 341.7,193.8 343.4,194.9 345.1,196.1 346.7,197.0 348.4,197.7 350.1,198.3 351.7,199.0 353.4,199.7 355.1,200.4 356.7,200.8 358.4,201.0 360.1,200.8 361.7,200.4 363.4,199.8 365.1,198.9 366.7,197.6 368.4,196.3 370.1,195.6 371.7,195.3 373.4,195.3 375.1,195.8 376.7,196.3 378.4,197.0 380.1,197.7 381.7,198.5 383.4,199.4 385.1,200.4 386.7,201.0 388.4,201.3 390.1,201.3 391.7,201.1 393.4,200.9 395.1,200.8 396.7,200.7 398.4,200.8 400.1,201.0 401.7,201.5 403.4,202.0 405.1,202.6 406.7,203.3 408.4,203.9 410.1,204.6 411.7,205.2 413.4,205.9 415.1,206.7 416.7,207.5 418.4,208.5 420.1,205.4 421.7,199.8 423.4,195.0 425.1,190.5 426.7,186.5 428.4,182.7 430.1,179.2 431.7,175.9 433.4,172.7 435.1,169.6 436.7,166.4 438.4,163.3 440.1,161.0 441.7,159.5 443.4,158.8 445.1,158.7 446.7,159.4 448.4,160.4 450.1,161.6 451.7,163.1 453.4,164.8 455.1,166.8 456.7,168.8 458.4,171.0 460.1,173.1 461.7,175.3 463.4,177.3 465.1,178.9 466.7,180.1 468.4,181.1 470.1,181.8 471.7,182.4 473.4,183.0 475.1,183.7 476.7,184.3 478.4,184.9 480.1,185.4 481.7,185.5 483.4,185.3 485.1,184.7 486.7,183.9 488.4,182.8 490.1,181.6 491.7,180.7 493.4,180.2 495.1,179.9 496.7,179.6 498.4,179.3 500.1,178.9 501.7,178.6 503.4,178.2 505.1,177.9 506.7,177.6 508.4,177.4 510.1,177.3 511.7,177.3 513.4,177.2 515.1,177.3 516.7,177.5 518.4,178.0 520.1,178.6 521.7,178.9 523.4,178.9 525.1,178.8 526.7,178.4 528.4,178.0 530.1,177.7 531.7,177.7 533.4,177.8 535.1,178.0 536.7,178.4 538.4,178.9 540.1,179.6 541.7,180.2 543.4,180.9 545.1,181.6 546.7,182.3 548.4,183.0 550.1,183.7 551.7,184.3 553.4,185.0 555.1,185.7 556.7,186.4 558.4,187.3 560.1,188.2 561.7,188.6 563.4,188.7 565.1,188.4 566.7,187.9 568.4,187.3 570.1,186.5 571.7,185.6 573.4,184.6 575.1,183.7 576.7,182.7 578.4,181.8 580.1,181.2 581.7,180.8 583.4,180.7 585.1,180.7 586.7,180.8 588.4,180.9 590.1,181.1 591.7,181.3 593.4,181.5 595.1,181.7 596.7,182.0 598.4,182.3 600.1,182.6 601.7,183.0 603.4,183.1 605.1,183.2 606.7,183.0 608.4,182.7 610.1,182.3 611.7,181.6 613.4,180.7 615.1,179.5 616.7,178.6 618.4,177.7 620.1,177.0 621.7,176.3 623.4,175.8 625.1,175.4 626.7,175.0 628.4,174.7 630.1,174.5 631.7,174.2 633.4,173.9 635.1,173.5 636.7,173.1 638.4,172.7 640.1,172.2 641.7,171.7 643.4,171.3 645.1,170.9 646.7,170.1 648.4,169.4 650.1,169.2 651.7,169.3 653.4,169.1 655.1,168.8 656.7,168.2 658.4,167.5 660.1,166.7 661.7,166.0 663.4,165.5 665.1,164.8 666.7,163.7 668.4,162.6 670.1,163.0 671.7,162.9 673.4,162.4 675.1,161.6 676.7,160.5 678.4,159.4 680.1,158.2 681.7,156.9 683.4,155.4 685.1,153.6 686.7,151.4 688.4,148.8 690.1,145.7 691.7,142.2 693.4,138.7 695.1,138.0 696.7,146.6 698.4,155.6 700.1,165.0 701.7,172.4 703.4,177.9 705.1,182.1 706.7,185.2 708.4,187.9 710.1,190.0 711.7,191.8 713.4,193.6 715.1,195.3 716.7,196.9 718.4,198.3 720.1,199.5 721.7,201.0 723.4,202.6 725.1,204.1 726.7,205.2 728.4,206.0 730.1,206.6 731.7,206.9 733.4,206.9 735.1,206.0 736.7,204.4 738.4,202.8 740.1,201.2 741.7,199.7 743.4,198.2 745.1,196.6 746.7,194.9 748.4,193.3 750.1,191.7 751.7,190.2 753.4,188.8 755.1,187.4 756.7,186.0 758.4,184.5 760.1,182.7 761.7,180.7 763.4,178.8 765.1,176.8 766.7,175.0 768.4,173.5 770.1,172.4 771.7,171.5 773.4,170.3 775.1,168.9 776.7,167.5 778.4,166.1" fill="none" stroke="#008800" stroke-width="0.9"/>
<path d="M695.5 43V411.2" stroke="#a00000" stroke-width="1"/><path d="M696 184V232" stroke="#c8a0a8" stroke-width="1.2"/>
<path d="M693.6 42.8h2.8l-1.4 1.6z" fill="#ff6060"/><path d="M638 42.8h3l-1.5 1.8z" fill="#2040ff"/><circle cx="695" cy="328.8" r="0.9" fill="#ffd0d0"/>
<path d="M192.40 255.30L193.30 254.40L195.60 256.70L197.60 254.80V259.60H192.80L194.70 257.60z" fill="#ffa500"/><path d="M265.20 140.30L266.10 139.40L268.40 141.70L270.40 139.80V144.60H265.60L267.50 142.60z" fill="#ffa500"/><path d="M372.20 181.80L373.10 180.90L375.40 183.20L377.40 181.30V186.10H372.60L374.50 184.10z" fill="#ffa500"/><path d="M439.10 121.80L440.00 120.90L442.30 123.20L444.30 121.30V126.10H439.50L441.40 124.10z" fill="#ffa500"/><path d="M512.40 164.10L513.30 163.20L515.60 165.50L517.60 163.60V168.40H512.80L514.70 166.40z" fill="#ffa500"/><path d="M585.80 171.90L586.70 171.00L589.00 173.30L591.00 171.40V176.20H586.20L588.10 174.20z" fill="#ffa500"/><path d="M685.40 88.60L686.30 87.70L688.60 90.00L690.60 88.10V92.90H685.80L687.70 90.90z" fill="#ffa500"/><path d="M198.80 279.30L199.70 280.20L202.00 277.90L204.00 279.80V275.00H199.20L201.10 277.00z" fill="#30e030"/><path d="M352.70 231.50L353.60 232.40L355.90 230.10L357.90 232.00V227.20H353.10L355.00 229.20z" fill="#30e030"/><path d="M412.40 246.70L413.30 247.60L415.60 245.30L417.60 247.20V242.40H412.80L414.70 244.40z" fill="#30e030"/><path d="M479.15 207.50L480.05 208.40L482.35 206.10L484.35 208.00V203.20H479.55L481.45 205.20z" fill="#30e030"/><path d="M559.10 202.70L560.00 203.60L562.30 201.30L564.30 203.20V198.40H559.50L561.40 200.40z" fill="#30e030"/><path d="M606.00 192.70L606.90 193.60L609.20 191.30L611.20 193.20V188.40H606.40L608.30 190.40z" fill="#30e030"/><path d="M725.20 238.70L726.10 239.60L728.40 237.30L730.40 239.20V234.40H725.60L727.50 236.40z" fill="#30e030"/>
<path d="M80 410h2.4l-1.2 1.6z" fill="#3050ff"/>
<path d="M780.4 51.9H782" stroke="#b4b4b4" stroke-width="0.6"/>
<text x="783.05" y="53.70" font-size="5.0" fill="#e4e4e4" textLength="13.30" lengthAdjust="spacingAndGlyphs" xml:space="preserve" stroke="#e4e4e4" stroke-width="0.1">147.650</text>
<path d="M780.4 65.6H782" stroke="#b4b4b4" stroke-width="0.6"/>
<text x="783.05" y="67.43" font-size="5.0" fill="#e4e4e4" textLength="13.30" lengthAdjust="spacingAndGlyphs" xml:space="preserve" stroke="#e4e4e4" stroke-width="0.1">147.190</text>
<path d="M780.4 79.4H782" stroke="#b4b4b4" stroke-width="0.6"/>
<text x="783.05" y="81.16" font-size="5.0" fill="#e4e4e4" textLength="13.30" lengthAdjust="spacingAndGlyphs" xml:space="preserve" stroke="#e4e4e4" stroke-width="0.1">146.730</text>
<path d="M780.4 93.1H782" stroke="#b4b4b4" stroke-width="0.6"/>
<text x="783.05" y="94.89" font-size="5.0" fill="#e4e4e4" textLength="13.30" lengthAdjust="spacingAndGlyphs" xml:space="preserve" stroke="#e4e4e4" stroke-width="0.1">146.270</text>
<path d="M780.4 106.8H782" stroke="#b4b4b4" stroke-width="0.6"/>
<text x="783.05" y="108.62" font-size="5.0" fill="#e4e4e4" textLength="13.30" lengthAdjust="spacingAndGlyphs" xml:space="preserve" stroke="#e4e4e4" stroke-width="0.1">145.810</text>
<path d="M780.4 120.6H782" stroke="#b4b4b4" stroke-width="0.6"/>
<text x="783.05" y="122.35" font-size="5.0" fill="#e4e4e4" textLength="13.30" lengthAdjust="spacingAndGlyphs" xml:space="preserve" stroke="#e4e4e4" stroke-width="0.1">145.350</text>
<path d="M780.4 134.3H782" stroke="#b4b4b4" stroke-width="0.6"/>
<text x="783.05" y="136.08" font-size="5.0" fill="#e4e4e4" textLength="13.30" lengthAdjust="spacingAndGlyphs" xml:space="preserve" stroke="#e4e4e4" stroke-width="0.1">144.890</text>
<path d="M780.4 148.0H782" stroke="#b4b4b4" stroke-width="0.6"/>
<text x="783.05" y="149.81" font-size="5.0" fill="#e4e4e4" textLength="13.30" lengthAdjust="spacingAndGlyphs" xml:space="preserve" stroke="#e4e4e4" stroke-width="0.1">144.430</text>
<path d="M780.4 161.7H782" stroke="#b4b4b4" stroke-width="0.6"/>
<text x="783.05" y="163.54" font-size="5.0" fill="#e4e4e4" textLength="13.30" lengthAdjust="spacingAndGlyphs" xml:space="preserve" stroke="#e4e4e4" stroke-width="0.1">143.970</text>
<path d="M780.4 175.5H782" stroke="#b4b4b4" stroke-width="0.6"/>
<text x="783.05" y="177.27" font-size="5.0" fill="#e4e4e4" textLength="13.30" lengthAdjust="spacingAndGlyphs" xml:space="preserve" stroke="#e4e4e4" stroke-width="0.1">143.510</text>
<path d="M780.4 189.2H782" stroke="#b4b4b4" stroke-width="0.6"/>
<text x="783.05" y="191.00" font-size="5.0" fill="#e4e4e4" textLength="13.30" lengthAdjust="spacingAndGlyphs" xml:space="preserve" stroke="#e4e4e4" stroke-width="0.1">143.060</text>
<path d="M780.4 202.9H782" stroke="#b4b4b4" stroke-width="0.6"/>
<text x="783.05" y="204.73" font-size="5.0" fill="#e4e4e4" textLength="13.30" lengthAdjust="spacingAndGlyphs" xml:space="preserve" stroke="#e4e4e4" stroke-width="0.1">142.600</text>
<path d="M780.4 216.7H782" stroke="#b4b4b4" stroke-width="0.6"/>
<text x="783.05" y="218.46" font-size="5.0" fill="#e4e4e4" textLength="13.30" lengthAdjust="spacingAndGlyphs" xml:space="preserve" stroke="#e4e4e4" stroke-width="0.1">142.140</text>
<path d="M780.4 230.4H782" stroke="#b4b4b4" stroke-width="0.6"/>
<text x="783.05" y="232.19" font-size="5.0" fill="#e4e4e4" textLength="13.30" lengthAdjust="spacingAndGlyphs" xml:space="preserve" stroke="#e4e4e4" stroke-width="0.1">141.680</text>
<path d="M780.4 244.1H782" stroke="#b4b4b4" stroke-width="0.6"/>
<text x="783.05" y="245.92" font-size="5.0" fill="#e4e4e4" textLength="13.30" lengthAdjust="spacingAndGlyphs" xml:space="preserve" stroke="#e4e4e4" stroke-width="0.1">141.220</text>
<path d="M780.4 257.9H782" stroke="#b4b4b4" stroke-width="0.6"/>
<text x="783.05" y="259.65" font-size="5.0" fill="#e4e4e4" textLength="13.30" lengthAdjust="spacingAndGlyphs" xml:space="preserve" stroke="#e4e4e4" stroke-width="0.1">140.760</text>
<path d="M780.4 271.6H782" stroke="#b4b4b4" stroke-width="0.6"/>
<text x="783.05" y="273.38" font-size="5.0" fill="#e4e4e4" textLength="13.30" lengthAdjust="spacingAndGlyphs" xml:space="preserve" stroke="#e4e4e4" stroke-width="0.1">140.300</text>
<path d="M780.4 285.3H782" stroke="#b4b4b4" stroke-width="0.6"/>
<text x="783.05" y="287.11" font-size="5.0" fill="#e4e4e4" textLength="13.30" lengthAdjust="spacingAndGlyphs" xml:space="preserve" stroke="#e4e4e4" stroke-width="0.1">139.840</text>
<path d="M780.4 299.0H782" stroke="#b4b4b4" stroke-width="0.6"/>
<text x="783.05" y="300.84" font-size="5.0" fill="#e4e4e4" textLength="13.30" lengthAdjust="spacingAndGlyphs" xml:space="preserve" stroke="#e4e4e4" stroke-width="0.1">139.380</text>
<path d="M780.4 312.8H782" stroke="#b4b4b4" stroke-width="0.6"/>
<text x="783.05" y="314.57" font-size="5.0" fill="#e4e4e4" textLength="13.30" lengthAdjust="spacingAndGlyphs" xml:space="preserve" stroke="#e4e4e4" stroke-width="0.1">138.920</text>
<path d="M780.4 326.5H782" stroke="#b4b4b4" stroke-width="0.6"/>
<text x="783.05" y="328.30" font-size="5.0" fill="#e4e4e4" textLength="13.30" lengthAdjust="spacingAndGlyphs" xml:space="preserve" stroke="#e4e4e4" stroke-width="0.1">138.460</text>
<rect x="780.4" y="135.8" width="17.4" height="3.9" fill="#ffffff"/>
<text x="782.45" y="139.28" font-size="4.4" fill="#1a1a1a" textLength="13.90" lengthAdjust="spacingAndGlyphs" xml:space="preserve" stroke="#1a1a1a" stroke-width="0.1">144.787</text>
<text x="782.00" y="333.88" font-size="4.4" fill="#d4d4d4" xml:space="preserve" stroke="#d4d4d4" stroke-width="0.1">55</text>
<text x="782.00" y="338.58" font-size="4.4" fill="#d4d4d4" xml:space="preserve" stroke="#d4d4d4" stroke-width="0.1">45</text>
<text x="782.00" y="371.58" font-size="4.4" fill="#d4d4d4" xml:space="preserve" stroke="#d4d4d4" stroke-width="0.1">0.00</text>
<text x="782.00" y="405.28" font-size="4.4" fill="#d4d4d4" xml:space="preserve" stroke="#d4d4d4" stroke-width="0.1">-45</text>
<text x="782.00" y="409.18" font-size="4.4" fill="#d4d4d4" xml:space="preserve" stroke="#d4d4d4" stroke-width="0.1">-55</text>
<path d="M80.5 411.2V413" stroke="#b4b4b4" stroke-width="0.6"/>
<text x="80.75" y="416.80" font-size="5.0" fill="#e4e4e4" textLength="21.20" lengthAdjust="spacingAndGlyphs" xml:space="preserve" stroke="#e4e4e4" stroke-width="0.1">1 Sep 2022</text>
<path d="M107.2 411.2V413" stroke="#b4b4b4" stroke-width="0.6"/>
<text x="107.41" y="416.80" font-size="5.0" fill="#e4e4e4" textLength="21.20" lengthAdjust="spacingAndGlyphs" xml:space="preserve" stroke="#e4e4e4" stroke-width="0.1">1 Sep 19:00</text>
<path d="M133.8 411.2V413" stroke="#b4b4b4" stroke-width="0.6"/>
<text x="134.07" y="416.80" font-size="5.0" fill="#e4e4e4" textLength="21.20" lengthAdjust="spacingAndGlyphs" xml:space="preserve" stroke="#e4e4e4" stroke-width="0.1">2 Sep 11:00</text>
<path d="M160.5 411.2V413" stroke="#b4b4b4" stroke-width="0.6"/>
<text x="160.73" y="416.80" font-size="5.0" fill="#e4e4e4" textLength="21.20" lengthAdjust="spacingAndGlyphs" xml:space="preserve" stroke="#e4e4e4" stroke-width="0.1">5 Sep 03:00</text>
<path d="M187.1 411.2V413" stroke="#b4b4b4" stroke-width="0.6"/>
<text x="187.39" y="416.80" font-size="5.0" fill="#e4e4e4" textLength="21.20" lengthAdjust="spacingAndGlyphs" xml:space="preserve" stroke="#e4e4e4" stroke-width="0.1">5 Sep 19:00</text>
<path d="M213.8 411.2V413" stroke="#b4b4b4" stroke-width="0.6"/>
<text x="214.05" y="416.80" font-size="5.0" fill="#e4e4e4" textLength="21.20" lengthAdjust="spacingAndGlyphs" xml:space="preserve" stroke="#e4e4e4" stroke-width="0.1">6 Sep 11:00</text>
<path d="M240.5 411.2V413" stroke="#b4b4b4" stroke-width="0.6"/>
<text x="240.71" y="416.80" font-size="5.0" fill="#e4e4e4" textLength="21.20" lengthAdjust="spacingAndGlyphs" xml:space="preserve" stroke="#e4e4e4" stroke-width="0.1">7 Sep 03:00</text>
<path d="M267.1 411.2V413" stroke="#b4b4b4" stroke-width="0.6"/>
<text x="267.37" y="416.80" font-size="5.0" fill="#e4e4e4" textLength="21.20" lengthAdjust="spacingAndGlyphs" xml:space="preserve" stroke="#e4e4e4" stroke-width="0.1">7 Sep 19:00</text>
<path d="M293.8 411.2V413" stroke="#b4b4b4" stroke-width="0.6"/>
<text x="294.03" y="416.80" font-size="5.0" fill="#e4e4e4" textLength="21.20" lengthAdjust="spacingAndGlyphs" xml:space="preserve" stroke="#e4e4e4" stroke-width="0.1">8 Sep 11:00</text>
<path d="M320.4 411.2V413" stroke="#b4b4b4" stroke-width="0.6"/>
<text x="320.69" y="416.80" font-size="5.0" fill="#e4e4e4" textLength="21.20" lengthAdjust="spacingAndGlyphs" xml:space="preserve" stroke="#e4e4e4" stroke-width="0.1">9 Sep 03:00</text>
<path d="M347.1 411.2V413" stroke="#b4b4b4" stroke-width="0.6"/>
<text x="347.35" y="416.80" font-size="5.0" fill="#e4e4e4" textLength="21.20" lengthAdjust="spacingAndGlyphs" xml:space="preserve" stroke="#e4e4e4" stroke-width="0.1">9 Sep 19:00</text>
<path d="M373.8 411.2V413" stroke="#b4b4b4" stroke-width="0.6"/>
<text x="374.01" y="416.80" font-size="5.0" fill="#e4e4e4" textLength="23.10" lengthAdjust="spacingAndGlyphs" xml:space="preserve" stroke="#e4e4e4" stroke-width="0.1">12 Sep 11:00</text>
<path d="M400.4 411.2V413" stroke="#b4b4b4" stroke-width="0.6"/>
<text x="400.67" y="416.80" font-size="5.0" fill="#e4e4e4" textLength="23.10" lengthAdjust="spacingAndGlyphs" xml:space="preserve" stroke="#e4e4e4" stroke-width="0.1">13 Sep 03:00</text>
<path d="M427.1 411.2V413" stroke="#b4b4b4" stroke-width="0.6"/>
<text x="427.33" y="416.80" font-size="5.0" fill="#e4e4e4" textLength="23.10" lengthAdjust="spacingAndGlyphs" xml:space="preserve" stroke="#e4e4e4" stroke-width="0.1">13 Sep 19:00</text>
<path d="M453.7 411.2V413" stroke="#b4b4b4" stroke-width="0.6"/>
<text x="453.99" y="416.80" font-size="5.0" fill="#e4e4e4" textLength="23.10" lengthAdjust="spacingAndGlyphs" xml:space="preserve" stroke="#e4e4e4" stroke-width="0.1">14 Sep 11:00</text>
<path d="M480.4 411.2V413" stroke="#b4b4b4" stroke-width="0.6"/>
<text x="480.65" y="416.80" font-size="5.0" fill="#e4e4e4" textLength="23.10" lengthAdjust="spacingAndGlyphs" xml:space="preserve" stroke="#e4e4e4" stroke-width="0.1">15 Sep 03:00</text>
<path d="M507.1 411.2V413" stroke="#b4b4b4" stroke-width="0.6"/>
<text x="507.31" y="416.80" font-size="5.0" fill="#e4e4e4" textLength="23.10" lengthAdjust="spacingAndGlyphs" xml:space="preserve" stroke="#e4e4e4" stroke-width="0.1">15 Sep 19:00</text>
<path d="M533.7 411.2V413" stroke="#b4b4b4" stroke-width="0.6"/>
<text x="533.97" y="416.80" font-size="5.0" fill="#e4e4e4" textLength="23.10" lengthAdjust="spacingAndGlyphs" xml:space="preserve" stroke="#e4e4e4" stroke-width="0.1">16 Sep 11:00</text>
<path d="M560.4 411.2V413" stroke="#b4b4b4" stroke-width="0.6"/>
<text x="560.63" y="416.80" font-size="5.0" fill="#e4e4e4" textLength="23.10" lengthAdjust="spacingAndGlyphs" xml:space="preserve" stroke="#e4e4e4" stroke-width="0.1">19 Sep 03:00</text>
<path d="M587.0 411.2V413" stroke="#b4b4b4" stroke-width="0.6"/>
<text x="587.29" y="416.80" font-size="5.0" fill="#e4e4e4" textLength="23.10" lengthAdjust="spacingAndGlyphs" xml:space="preserve" stroke="#e4e4e4" stroke-width="0.1">19 Sep 19:00</text>
<path d="M613.7 411.2V413" stroke="#b4b4b4" stroke-width="0.6"/>
<text x="613.95" y="416.80" font-size="5.0" fill="#e4e4e4" textLength="23.10" lengthAdjust="spacingAndGlyphs" xml:space="preserve" stroke="#e4e4e4" stroke-width="0.1">20 Sep 11:00</text>
<path d="M640.4 411.2V413" stroke="#b4b4b4" stroke-width="0.6"/>
<text x="640.61" y="416.80" font-size="5.0" fill="#e4e4e4" textLength="23.10" lengthAdjust="spacingAndGlyphs" xml:space="preserve" stroke="#e4e4e4" stroke-width="0.1">21 Sep 03:00</text>
<path d="M667.0 411.2V413" stroke="#b4b4b4" stroke-width="0.6"/>
<text x="667.27" y="416.80" font-size="5.0" fill="#e4e4e4" textLength="23.10" lengthAdjust="spacingAndGlyphs" xml:space="preserve" stroke="#e4e4e4" stroke-width="0.1">21 Sep 19:00</text>
<path d="M693.7 411.2V413" stroke="#b4b4b4" stroke-width="0.6"/>
<text x="693.93" y="416.80" font-size="5.0" fill="#e4e4e4" textLength="23.10" lengthAdjust="spacingAndGlyphs" xml:space="preserve" stroke="#e4e4e4" stroke-width="0.1">22 Sep 11:00</text>
<path d="M720.3 411.2V413" stroke="#b4b4b4" stroke-width="0.6"/>
<text x="720.59" y="416.80" font-size="5.0" fill="#e4e4e4" textLength="23.10" lengthAdjust="spacingAndGlyphs" xml:space="preserve" stroke="#e4e4e4" stroke-width="0.1">23 Sep 03:00</text>
<path d="M747.0 411.2V413" stroke="#b4b4b4" stroke-width="0.6"/>
<text x="747.25" y="416.80" font-size="5.0" fill="#e4e4e4" textLength="23.10" lengthAdjust="spacingAndGlyphs" xml:space="preserve" stroke="#e4e4e4" stroke-width="0.1">23 Sep 19:00</text>
<path d="M773.7 411.2V413" stroke="#b4b4b4" stroke-width="0.6"/>
<text x="773.91" y="416.80" font-size="5.0" fill="#e4e4e4" textLength="23.10" lengthAdjust="spacingAndGlyphs" xml:space="preserve" stroke="#e4e4e4" stroke-width="0.1">26 Sep 11:00</text>
<rect x="678" y="412.7" width="33.6" height="4.9" fill="#f00000"/>
<text x="680.25" y="416.68" font-size="4.4" fill="#a00000" textLength="29.00" lengthAdjust="spacingAndGlyphs" xml:space="preserve" stroke="#a00000" stroke-width="0.1">2022.09.22 11:00</text>
<path d="M81.2 44.3h3.2l-1.6 1.9z" fill="#e0e0e0"/>
<text x="85.75" y="47.75" font-size="4.3" fill="#c8ccd0" textLength="21.00" lengthAdjust="spacingAndGlyphs" xml:space="preserve">USDJPY,H1</text>
<text x="84.00" y="63.24" font-size="5.4" fill="#c00000" textLength="19.75" lengthAdjust="spacingAndGlyphs" xml:space="preserve" stroke="#c00000" stroke-width="0.1">01:26:39</text>
<text x="108.00" y="63.24" font-size="5.4" fill="#c00000" textLength="69.55" lengthAdjust="spacingAndGlyphs" xml:space="preserve" stroke="#c00000" stroke-width="0.1">GBP: BRC Shop Price Index y/y</text>
<text x="84.00" y="70.44" font-size="5.4" fill="#c00000" textLength="19.75" lengthAdjust="spacingAndGlyphs" xml:space="preserve" stroke="#c00000" stroke-width="0.1">02:15:39</text>
<text x="108.00" y="70.44" font-size="5.4" fill="#c00000" textLength="83.50" lengthAdjust="spacingAndGlyphs" xml:space="preserve" stroke="#c00000" stroke-width="0.1">JPY: Monetary Policy Meeting Minutes</text>
<text x="84.00" y="77.19" font-size="5.4" fill="#c00000" textLength="19.75" lengthAdjust="spacingAndGlyphs" xml:space="preserve" stroke="#c00000" stroke-width="0.1">02:25:39</text>
<text x="108.00" y="77.19" font-size="5.4" fill="#c00000" textLength="71.95" lengthAdjust="spacingAndGlyphs" xml:space="preserve" stroke="#c00000" stroke-width="0.1">NZD: ANZ Business Confidence</text>
<text x="84.00" y="84.34" font-size="5.4" fill="#c00000" textLength="19.75" lengthAdjust="spacingAndGlyphs" xml:space="preserve" stroke="#c00000" stroke-width="0.1">03:55:39</text>
<text x="108.00" y="84.34" font-size="5.4" fill="#c00000" textLength="51.25" lengthAdjust="spacingAndGlyphs" xml:space="preserve" stroke="#c00000" stroke-width="0.1">AUD: Retail Sales m/m</text>
<text x="84.00" y="91.44" font-size="5.4" fill="#c00000" textLength="19.75" lengthAdjust="spacingAndGlyphs" xml:space="preserve" stroke="#c00000" stroke-width="0.1">08:25:39</text>
<text x="108.00" y="91.44" font-size="5.4" fill="#c00000" textLength="85.75" lengthAdjust="spacingAndGlyphs" xml:space="preserve" stroke="#c00000" stroke-width="0.1">EUR: German GfK Consumer Climate</text>
<rect x="455.5" y="59.8" width="28.5" height="7" fill="#5c5c5c"/>
<text x="461.25" y="64.96" font-size="4.6" fill="#00e000" textLength="15.50" lengthAdjust="spacingAndGlyphs" xml:space="preserve" stroke="#00e000" stroke-width="0.1">arrows</text>
<text x="582.75" y="326.15" font-size="8.2" fill="#e8e8e8" textLength="65.75" lengthAdjust="spacingAndGlyphs" xml:space="preserve" stroke="#e8e8e8" stroke-width="0.1">Acc Profit : $ 0.00</text>
<text x="748.85" y="322.19" font-size="15.8" fill="#ffffff" textLength="22.00" lengthAdjust="spacingAndGlyphs" xml:space="preserve" stroke="#ffffff" stroke-width="0.1">2.7</text>
<rect x="0" y="40.8" width="78" height="378.2" fill="#f0f0f0"/>
<rect x="1.3" y="41.7" width="69.6" height="5.7" fill="#cddbeb"/>
<text x="2.25" y="46.27" font-size="5.2" fill="#1e1e1e" textLength="18.80" lengthAdjust="spacingAndGlyphs" xml:space="preserve" stroke="#1e1e1e" stroke-width="0.1">Navigator</text>
<path d="M72.9 43.2l2.4 2.4M75.3 43.2l-2.4 2.4" stroke="#222" stroke-width="0.7"/>
<rect x="1.3" y="47.4" width="75.8" height="362" fill="#ffffff"/>
<rect x="77" y="47.4" width="0.7" height="362" fill="#c4c4c4"/>
<defs><clipPath id="navclip"><rect x="0" y="47" width="76.6" height="360"/></clipPath></defs><g clip-path="url(#navclip)">
<path d="M7 62V194.6M15.8 70V112M19 115V179.6" stroke="#c8c8c8" stroke-width="0.5" stroke-dasharray="0.6 0.6" fill="none"/>
<rect x="3.9" y="49" width="4.8" height="5.8" rx="0.5" fill="#dbe8f7" stroke="#5a92d2" stroke-width="0.5"/><rect x="4.6" y="50.3" width="3.4" height="1" fill="#5a92d2"/>
<text x="13.05" y="54.19" font-size="5.8" fill="#1e1e1e" textLength="32.60" lengthAdjust="spacingAndGlyphs" xml:space="preserve" stroke="#1e1e1e" stroke-width="0.1">FOREX.com US</text>
<rect x="5.3" y="57.400000000000006" width="3.4" height="3.4" fill="#fafafa" stroke="#9aaec4" stroke-width="0.4"/><path d="M6 59.1h2" stroke="#333" stroke-width="0.35"/>
<rect x="12.5" y="56.2" width="6.2" height="6" rx="0.6" fill="#e8c040" stroke="#b08a20" stroke-width="0.4"/><circle cx="12.9" cy="60.800000000000004" r="1.3" fill="#30b030"/>
<text x="21.95" y="61.29" font-size="5.8" fill="#1e1e1e" textLength="20.50" lengthAdjust="spacingAndGlyphs" xml:space="preserve" stroke="#1e1e1e" stroke-width="0.1">Accounts</text>
<rect x="5.3" y="65.10000000000001" width="3.4" height="3.4" fill="#fafafa" stroke="#9aaec4" stroke-width="0.4"/><path d="M6 66.80000000000001h2" stroke="#333" stroke-width="0.35"/>
<rect x="12.5" y="63.900000000000006" width="6.2" height="6" rx="0.6" fill="#f7e38a" stroke="#c8a440" stroke-width="0.45"/><path d="M15.2 65.30000000000001l1.2 0.2-1 2.6" stroke="#806010" stroke-width="0.45" fill="none"/>
<text x="21.95" y="68.99" font-size="5.8" fill="#1e1e1e" textLength="21.00" lengthAdjust="spacingAndGlyphs" xml:space="preserve" stroke="#1e1e1e" stroke-width="0.1">Indicators</text>
<rect x="14.2" y="72.6" width="3.2" height="3.2" fill="#fafafa" stroke="#9aaec4" stroke-width="0.4"/><path d="M14.8 74.2h2" stroke="#333" stroke-width="0.35"/>
<rect x="21.3" y="71.3" width="5.8" height="6" rx="0.6" fill="#f7e38a" stroke="#c8a440" stroke-width="0.45"/><path d="M23.6 72.7l1.2 0.2-1 2.6" stroke="#806010" stroke-width="0.45" fill="none"/>
<text x="30.85" y="76.39" font-size="5.8" fill="#1e1e1e" textLength="11.90" lengthAdjust="spacingAndGlyphs" xml:space="preserve" stroke="#1e1e1e" stroke-width="0.1">Trend</text>
<rect x="14.2" y="80.3" width="3.2" height="3.2" fill="#fafafa" stroke="#9aaec4" stroke-width="0.4"/><path d="M14.8 81.9h2" stroke="#333" stroke-width="0.35"/>
<rect x="21.3" y="79" width="5.8" height="6" rx="0.6" fill="#f7e38a" stroke="#c8a440" stroke-width="0.45"/><path d="M23.6 80.4l1.2 0.2-1 2.6" stroke="#806010" stroke-width="0.45" fill="none"/>
<text x="30.85" y="84.09" font-size="5.8" fill="#1e1e1e" textLength="21.90" lengthAdjust="spacingAndGlyphs" xml:space="preserve" stroke="#1e1e1e" stroke-width="0.1">Oscillators</text>
<rect x="14.2" y="87.6" width="3.2" height="3.2" fill="#fafafa" stroke="#9aaec4" stroke-width="0.4"/><path d="M14.8 89.2h2" stroke="#333" stroke-width="0.35"/>
<rect x="21.3" y="86.3" width="5.8" height="6" rx="0.6" fill="#f7e38a" stroke="#c8a440" stroke-width="0.45"/><path d="M23.6 87.7l1.2 0.2-1 2.6" stroke="#806010" stroke-width="0.45" fill="none"/>
<text x="30.85" y="91.39" font-size="5.8" fill="#1e1e1e" textLength="18.30" lengthAdjust="spacingAndGlyphs" xml:space="preserve" stroke="#1e1e1e" stroke-width="0.1">Volumes</text>
<rect x="14.2" y="95.1" width="3.2" height="3.2" fill="#fafafa" stroke="#9aaec4" stroke-width="0.4"/><path d="M14.8 96.7h2" stroke="#333" stroke-width="0.35"/>
<rect x="21.3" y="93.8" width="5.8" height="6" rx="0.6" fill="#f7e38a" stroke="#c8a440" stroke-width="0.45"/><path d="M23.6 95.2l1.2 0.2-1 2.6" stroke="#806010" stroke-width="0.45" fill="none"/>
<text x="30.85" y="98.89" font-size="5.8" fill="#1e1e1e" textLength="25.80" lengthAdjust="spacingAndGlyphs" xml:space="preserve" stroke="#1e1e1e" stroke-width="0.1">Bill Williams</text>
<rect x="14.2" y="102.7" width="3.2" height="3.2" fill="#fafafa" stroke="#9aaec4" stroke-width="0.4"/><path d="M14.8 104.30000000000001h2" stroke="#333" stroke-width="0.35"/>
<rect x="21.3" y="101.4" width="5.8" height="6" rx="0.6" fill="#f7e38a" stroke="#c8a440" stroke-width="0.45"/><path d="M23.6 102.80000000000001l1.2 0.2-1 2.6" stroke="#806010" stroke-width="0.45" fill="none"/>
<text x="30.85" y="106.49" font-size="5.8" fill="#1e1e1e" textLength="15.10" lengthAdjust="spacingAndGlyphs" xml:space="preserve" stroke="#1e1e1e" stroke-width="0.1">Default</text>
<rect x="14.2" y="110.2" width="3.2" height="3.2" fill="#fafafa" stroke="#9aaec4" stroke-width="0.4"/><path d="M14.8 111.80000000000001h2" stroke="#333" stroke-width="0.35"/>
<rect x="21.3" y="108.9" width="5.8" height="6" rx="0.6" fill="#f7e38a" stroke="#c8a440" stroke-width="0.45"/><path d="M23.6 110.30000000000001l1.2 0.2-1 2.6" stroke="#806010" stroke-width="0.45" fill="none"/>
<text x="30.85" y="113.99" font-size="5.8" fill="#1e1e1e" textLength="20.10" lengthAdjust="spacingAndGlyphs" xml:space="preserve" stroke="#1e1e1e" stroke-width="0.1">Examples</text>
<path d="M19 119.3h2" stroke="#c8c8c8" stroke-width="0.5"/>
<rect x="21.3" y="116.3" width="5.8" height="6" rx="0.6" fill="#f7e38a" stroke="#c8a440" stroke-width="0.45"/><path d="M23.6 117.7l1.2 0.2-1 2.6" stroke="#806010" stroke-width="0.45" fill="none"/>
<text x="30.85" y="121.39" font-size="5.8" fill="#1e1e1e" textLength="35.20" lengthAdjust="spacingAndGlyphs" xml:space="preserve" stroke="#1e1e1e" stroke-width="0.1">! RSI ma BT mod</text>
<path d="M19 127h2" stroke="#c8c8c8" stroke-width="0.5"/>
<rect x="21.3" y="124" width="5.8" height="6" rx="0.6" fill="#f7e38a" stroke="#c8a440" stroke-width="0.45"/><path d="M23.6 125.4l1.2 0.2-1 2.6" stroke="#806010" stroke-width="0.45" fill="none"/>
<text x="30.85" y="129.09" font-size="5.8" fill="#1e1e1e" textLength="43.90" lengthAdjust="spacingAndGlyphs" xml:space="preserve" stroke="#1e1e1e" stroke-width="0.1">adaptive rsx 3.2 oma</text>
<path d="M19 134.4h2" stroke="#c8c8c8" stroke-width="0.5"/>
<rect x="21.3" y="131.4" width="5.8" height="6" rx="0.6" fill="#f7e38a" stroke="#c8a440" stroke-width="0.45"/><path d="M23.6 132.8l1.2 0.2-1 2.6" stroke="#806010" stroke-width="0.45" fill="none"/>
<text x="30.85" y="136.49" font-size="5.8" fill="#1e1e1e" textLength="27.40" lengthAdjust="spacingAndGlyphs" xml:space="preserve" stroke="#1e1e1e" stroke-width="0.1">CandleTimer</text>
<path d="M19 142h2" stroke="#c8c8c8" stroke-width="0.5"/>
<rect x="21.3" y="139" width="5.8" height="6" rx="0.6" fill="#f7e38a" stroke="#c8a440" stroke-width="0.45"/><path d="M23.6 140.4l1.2 0.2-1 2.6" stroke="#806010" stroke-width="0.45" fill="none"/>
<text x="30.80" y="144.09" font-size="5.8" fill="#1e1e1e" xml:space="preserve" stroke="#1e1e1e" stroke-width="0.1" textLength="61.50" lengthAdjust="spacingAndGlyphs">DaVinci Truly News Indicator</text>
<path d="M19 149.5h2" stroke="#c8c8c8" stroke-width="0.5"/>
<rect x="21.3" y="146.5" width="5.8" height="6" rx="0.6" fill="#f7e38a" stroke="#c8a440" stroke-width="0.45"/><path d="M23.6 147.9l1.2 0.2-1 2.6" stroke="#806010" stroke-width="0.45" fill="none"/>
<text x="30.85" y="151.59" font-size="5.8" fill="#1e1e1e" textLength="25.90" lengthAdjust="spacingAndGlyphs" xml:space="preserve" stroke="#1e1e1e" stroke-width="0.1">Heiken Ashi</text>
<path d="M19 157h2" stroke="#c8c8c8" stroke-width="0.5"/>
<rect x="21.3" y="154" width="5.8" height="6" rx="0.6" fill="#f7e38a" stroke="#c8a440" stroke-width="0.45"/><path d="M23.6 155.4l1.2 0.2-1 2.6" stroke="#806010" stroke-width="0.45" fill="none"/>
<text x="30.80" y="159.09" font-size="5.8" fill="#1e1e1e" xml:space="preserve" stroke="#1e1e1e" stroke-width="0.1" textLength="48.73" lengthAdjust="spacingAndGlyphs">RSI arrows onchart BT</text>
<path d="M19 164.5h2" stroke="#c8c8c8" stroke-width="0.5"/>
<rect x="21.3" y="161.5" width="5.8" height="6" rx="0.6" fill="#f7e38a" stroke="#c8a440" stroke-width="0.45"/><path d="M23.6 162.9l1.2 0.2-1 2.6" stroke="#806010" stroke-width="0.45" fill="none"/>
<text x="30.80" y="166.59" font-size="5.8" fill="#1e1e1e" xml:space="preserve" stroke="#1e1e1e" stroke-width="0.1" textLength="58.92" lengthAdjust="spacingAndGlyphs">rsi of vhf adaptive averages</text>
<path d="M19 172h2" stroke="#c8c8c8" stroke-width="0.5"/>
<rect x="21.3" y="169" width="5.8" height="6" rx="0.6" fill="#f7e38a" stroke="#c8a440" stroke-width="0.45"/><path d="M23.6 170.4l1.2 0.2-1 2.6" stroke="#806010" stroke-width="0.45" fill="none"/>
<text x="30.85" y="174.09" font-size="5.8" fill="#1e1e1e" textLength="14.20" lengthAdjust="spacingAndGlyphs" xml:space="preserve" stroke="#1e1e1e" stroke-width="0.1">Spread</text>
<path d="M19 179.6h2" stroke="#c8c8c8" stroke-width="0.5"/>
<rect x="21.3" y="176.6" width="5.8" height="6" rx="0.6" fill="#f7e38a" stroke="#c8a440" stroke-width="0.45"/><path d="M23.6 178.0l1.2 0.2-1 2.6" stroke="#806010" stroke-width="0.45" fill="none"/>
<text x="30.85" y="181.69" font-size="5.8" fill="#1e1e1e" textLength="16.10" lengthAdjust="spacingAndGlyphs" xml:space="preserve" stroke="#1e1e1e" stroke-width="0.1">Trades#</text>
<rect x="5.3" y="185.2" width="3.4" height="3.4" fill="#fafafa" stroke="#9aaec4" stroke-width="0.4"/><path d="M6 186.9h2" stroke="#333" stroke-width="0.35"/>
<path d="M12.3 186.5a3.3 2.6 0 0 1 6.6 0z" fill="#4a9ad8"/><rect x="13.2" y="186.6" width="5" height="3" fill="#f0c840"/>
<text x="21.95" y="189.09" font-size="5.8" fill="#1e1e1e" textLength="33.50" lengthAdjust="spacingAndGlyphs" xml:space="preserve" stroke="#1e1e1e" stroke-width="0.1">Expert Advisors</text>
<rect x="5.3" y="192.79999999999998" width="3.4" height="3.4" fill="#fafafa" stroke="#9aaec4" stroke-width="0.4"/><path d="M6 194.5h2" stroke="#333" stroke-width="0.35"/>
<path d="M12.5 191.6h6l-2 3 2 3h-6l2-3z" fill="#f0c840" stroke="#b08a20" stroke-width="0.4"/>
<text x="21.95" y="196.69" font-size="5.8" fill="#1e1e1e" textLength="13.60" lengthAdjust="spacingAndGlyphs" xml:space="preserve" stroke="#1e1e1e" stroke-width="0.1">Scripts</text>
</g>
<rect x="1.3" y="409.2" width="75.8" height="9.4" fill="#f0f0f0"/>
<path d="M2.3 409.3V417.6H32.2V409.3" stroke="#606060" stroke-width="0.6" fill="#ffffff"/>
<path d="M32.2 409.3H76.6" stroke="#606060" stroke-width="0.6"/>
<text x="7.25" y="415.51" font-size="5.3" fill="#222" textLength="20.50" lengthAdjust="spacingAndGlyphs" xml:space="preserve" stroke="#222" stroke-width="0.1">Common</text>
<text x="36.45" y="415.51" font-size="5.3" fill="#9a9a9a" textLength="18.90" lengthAdjust="spacingAndGlyphs" xml:space="preserve" stroke="#9a9a9a" stroke-width="0.1">Favorites</text>
<path d="M60.5 411V416" stroke="#b0b0b0" stroke-width="0.5"/>
<rect x="0" y="419" width="800" height="11" fill="#f0f0f0"/>
<rect x="0" y="419" width="800" height="0.5" fill="#e2e2e2"/>
<text x="1.25" y="427.69" font-size="5.8" fill="#202020" textLength="37.50" lengthAdjust="spacingAndGlyphs" xml:space="preserve" stroke="#202020" stroke-width="0.1">For Help, press F1</text>
<path d="M510 421.5V429" stroke="#d0d0d0" stroke-width="0.5"/>
<path d="M558.75 421.5V429" stroke="#d0d0d0" stroke-width="0.5"/>
<path d="M631.25 421.5V429" stroke="#d0d0d0" stroke-width="0.5"/>
<path d="M660 421.5V429" stroke="#d0d0d0" stroke-width="0.5"/>
<path d="M688.75 421.5V429" stroke="#d0d0d0" stroke-width="0.5"/>
<path d="M717.5 421.5V429" stroke="#d0d0d0" stroke-width="0.5"/>
<path d="M745 421.5V429" stroke="#d0d0d0" stroke-width="0.5"/>
<text x="514.00" y="427.61" font-size="5.3" fill="#202020" textLength="14.50" lengthAdjust="spacingAndGlyphs" xml:space="preserve" stroke="#202020" stroke-width="0.1">Default</text>
<text x="562.25" y="427.61" font-size="5.3" fill="#202020" textLength="34.50" lengthAdjust="spacingAndGlyphs" xml:space="preserve" stroke="#202020" stroke-width="0.1">2022.09.12 17:00</text>
<text x="604.75" y="427.61" font-size="5.3" fill="#202020" textLength="22.00" lengthAdjust="spacingAndGlyphs" xml:space="preserve" stroke="#202020" stroke-width="0.1">O: 142.590</text>
<text x="634.00" y="427.61" font-size="5.3" fill="#202020" textLength="22.75" lengthAdjust="spacingAndGlyphs" xml:space="preserve" stroke="#202020" stroke-width="0.1">H: 142.737</text>
<text x="662.75" y="427.61" font-size="5.3" fill="#202020" textLength="22.00" lengthAdjust="spacingAndGlyphs" xml:space="preserve" stroke="#202020" stroke-width="0.1">L: 142.367</text>
<text x="692.25" y="427.61" font-size="5.3" fill="#202020" textLength="22.00" lengthAdjust="spacingAndGlyphs" xml:space="preserve" stroke="#202020" stroke-width="0.1">C: 142.391</text>
<text x="721.50" y="427.61" font-size="5.3" fill="#202020" textLength="14.50" lengthAdjust="spacingAndGlyphs" xml:space="preserve" stroke="#202020" stroke-width="0.1">V: 8842</text>
<text x="760.25" y="427.61" font-size="5.3" fill="#202020" textLength="23.25" lengthAdjust="spacingAndGlyphs" xml:space="preserve" stroke="#202020" stroke-width="0.1">42189/8 kb</text>
<rect x="748" y="422.5" width="10" height="5.5" fill="#2f6fa8"/><path d="M748 427.5l4-2 3 .5 3-3V428z" fill="#8fc0a0"/>
<rect x="0" y="430" width="800" height="20" fill="#e6e4f6"/>
<path d="M9.3 440.5a3.9 3.9 0 0 1 7.8 0" fill="#f5b82a"/><ellipse cx="13.6" cy="441.3" rx="3.8" ry="1.8" fill="#cfd8ea"/>
<text x="20.75" y="439.02" font-size="5.6" fill="#202020" textLength="9.00" lengthAdjust="spacingAndGlyphs" xml:space="preserve" stroke="#202020" stroke-width="0.1">58°F</text>
<text x="20.25" y="445.92" font-size="5.6" fill="#5c5c5c" textLength="26.50" lengthAdjust="spacingAndGlyphs" xml:space="preserve" stroke="#5c5c5c" stroke-width="0.1">Partly sunny</text>
<rect x="312.5" y="435" width="5" height="4.8" fill="#1e8fe0"/><rect x="318" y="435" width="5" height="4.8" fill="#3aa8f0"/><rect x="312.5" y="440.3" width="5" height="4.8" fill="#1a80d8"/><rect x="318" y="440.3" width="5" height="4.8" fill="#2a98e8"/>
<circle cx="337" cy="439.2" r="3" fill="none" stroke="#222" stroke-width="1"/><path d="M334.8 441.4L332.4 443.8" stroke="#222" stroke-width="1.1"/>
<rect x="349.5" y="438" width="5.5" height="6.5" fill="#2a2a2a"/><rect x="353" y="435.5" width="5.5" height="6.5" fill="#d8d8d8" stroke="#666" stroke-width="0.3"/>
<circle cx="372.5" cy="440" r="4.2" fill="#7b5ce0"/><circle cx="372.5" cy="440" r="2.4" fill="#fff"/><rect x="370.5" y="439" width="3" height="2" fill="#7b5ce0"/>
<rect x="386" y="434.5" width="11.5" height="11" rx="1.5" fill="#1d1d1d"/><path d="M388.8 443V437.5L394.5 443V437.5" stroke="#fff" stroke-width="0.9" fill="none"/>
<path d="M404.5 436.5h4l1 1.2h5.5V445h-10.5z" fill="#f0b428"/><rect x="404.5" y="439" width="10.5" height="6" fill="#ffd24a"/><rect x="407" y="442" width="5" height="1.2" fill="#2a7ad0"/>
<circle cx="427.8" cy="440" r="5" fill="#1a8ad8"/><path d="M424 441.5a4 3 0 0 1 7.5-1.5" stroke="#3ac860" stroke-width="1.5" fill="none"/><circle cx="428" cy="440.8" r="1.6" fill="#e6e4f6"/>
<rect x="440.75" y="434.5" width="10.5" height="11" rx="1" fill="#131722"/><path d="M442.5 438h3.5M444.2 438v4.5M446.5 438l1.6 4.5 1.6-4.5" stroke="#fff" stroke-width="0.9" fill="none"/>
<rect x="457" y="432.5" width="15.5" height="15" rx="1.5" fill="#f4f3fb"/><circle cx="464.5" cy="440" r="5.2" fill="#24a85a"/><path d="M463.8 436.6q2.6 3.3 0 6.8" stroke="#fff" stroke-width="1.5" fill="none"/><rect x="461" y="447" width="7" height="1.1" rx="0.5" fill="#2a6ad0"/>
<rect x="477.5" y="434.5" width="10" height="11" fill="#b03060"/><rect x="477.5" y="437" width="10" height="2.5" fill="#3a7ad0"/><rect x="477.5" y="441" width="10" height="2.5" fill="#40a040"/><rect x="481.5" y="434.5" width="2" height="11" fill="#e8c040"/>
<rect x="426.5" y="448" width="2" height="0.7" fill="#888"/><rect x="445" y="448" width="2" height="0.7" fill="#888"/><rect x="481.5" y="448" width="2" height="0.7" fill="#888"/>
<path d="M685 441.5l2.5-2.5 2.5 2.5" stroke="#333" stroke-width="0.7" fill="none"/>
<circle cx="696" cy="440" r="2.8" fill="#f3c540"/><circle cx="697.8" cy="441.3" r="1.8" fill="#30a030"/>
<path d="M704 442.2a3.5 3 0 0 1 7 0z" fill="#777"/><rect x="704" y="441.5" width="7" height="1.5" fill="#555"/>
<path d="M715 440a3 3 0 0 1 5.5-1.5" stroke="#555" stroke-width="0.8" fill="none"/><circle cx="719.5" cy="441.5" r="2" fill="#f08020"/>
<path d="M725 439.5a5 5 0 0 1 7.5 0M726.3 441a3.2 3.2 0 0 1 4.9 0" stroke="#444" stroke-width="0.7" fill="none"/><circle cx="728.75" cy="442.6" r="0.8" fill="#444"/>
<path d="M735.5 439h1.5l2-1.8v6.2l-2-1.8h-1.5z" fill="#444"/><path d="M740.2 438.7a2.5 2.5 0 0 1 0 3.6M741.4 437.8a3.8 3.8 0 0 1 0 5.4" stroke="#444" stroke-width="0.5" fill="none"/>
<rect x="745.5" y="438.2" width="7" height="3.8" fill="none" stroke="#444" stroke-width="0.6"/><rect x="746.3" y="439" width="3.4" height="2.2" fill="#444"/><rect x="752.6" y="439.3" width="0.7" height="1.6" fill="#444"/>
<text x="764.00" y="438.17" font-size="5.2" fill="#202020" textLength="17.75" lengthAdjust="spacingAndGlyphs" xml:space="preserve" stroke="#202020" stroke-width="0.1">5:34 PM</text>
<text x="759.00" y="445.62" font-size="5.2" fill="#202020" textLength="21.75" lengthAdjust="spacingAndGlyphs" xml:space="preserve" stroke="#202020" stroke-width="0.1">9/27/2022</text>
<circle cx="789" cy="440" r="3.3" fill="#2a7ad8"/><text x="788" y="441.7" font-size="4.4" fill="#fff">3</text>
</svg>
<div class="a" style="left:25.8px;top:289.6px;width:266px;height:78.6px;background:#f3f3f3;border-radius:3px;box-shadow:0 2px 7px rgba(0,0,0,0.32), 0 0 0 0.5px rgba(0,0,0,0.25)"></div>
<svg class="a" style="left:0;top:0" width="800" height="450" viewBox="0 0 800 450">
<path d="M28.8 289.6H289V302.6H25.8V292.6A3 3 0 0 1 28.8 289.6z" fill="#ffffff"/>
<rect x="28.8" y="291.8" width="5.4" height="4.6" fill="#dbe8f7" stroke="#5a92d2" stroke-width="0.5"/><rect x="31.2" y="294" width="4.6" height="4.6" rx="0.5" fill="#f3d458" stroke="#c09a28" stroke-width="0.4"/>
<text x="38.25" y="297.72" font-size="5.6" fill="#9a9a9a" textLength="53.50" lengthAdjust="spacingAndGlyphs" xml:space="preserve" stroke="#9a9a9a" stroke-width="0.1">Indicators on USDJPY,H1</text>
<text x="272.85" y="297.69" font-size="5.8" fill="#888" textLength="1.90" lengthAdjust="spacingAndGlyphs" xml:space="preserve" stroke="#888" stroke-width="0.1">?</text>
<rect x="29.2" y="305" width="226.4" height="59" fill="#fff" stroke="#c6c6c6" stroke-width="0.6"/>
<rect x="248" y="305.4" width="7.3" height="58.3" fill="#f0f0f0"/>
<rect x="251.2" y="326" width="0.9" height="31" fill="#858585"/>
<path d="M36.2 305.4V345.5M44 305.4V340M44 350V355.2" stroke="#c4c4c4" stroke-width="0.5" fill="none"/>
<path d="M44 310.2h5" stroke="#c4c4c4" stroke-width="0.5"/>
<path d="M44 317.6h5" stroke="#c4c4c4" stroke-width="0.5"/>
<path d="M44 325h5" stroke="#c4c4c4" stroke-width="0.5"/>
<path d="M44 332.5h5" stroke="#c4c4c4" stroke-width="0.5"/>
<path d="M44 340h5" stroke="#c4c4c4" stroke-width="0.5"/>
<path d="M44 355.2h5" stroke="#c4c4c4" stroke-width="0.5"/>
<rect x="56.75" y="336.75" width="47.25" height="6.75" fill="#ececec"/>
<rect x="49.4" y="307.0" width="6.4" height="6.4" rx="0.6" fill="#f7e38a" stroke="#c8a440" stroke-width="0.45"/><path d="M52 308.4l1.2 .2-1 2.8" stroke="#806010" stroke-width="0.45" fill="none"/>
<text x="58.05" y="312.29" font-size="5.8" fill="#222" textLength="24.40" lengthAdjust="spacingAndGlyphs" xml:space="preserve" stroke="#222" stroke-width="0.1">CandleTimer</text>
<rect x="49.4" y="314.40000000000003" width="6.4" height="6.4" rx="0.6" fill="#f7e38a" stroke="#c8a440" stroke-width="0.45"/><path d="M52 315.8l1.2 .2-1 2.8" stroke="#806010" stroke-width="0.45" fill="none"/>
<text x="58.05" y="319.69" font-size="5.8" fill="#222" textLength="71.20" lengthAdjust="spacingAndGlyphs" xml:space="preserve" stroke="#222" stroke-width="0.1">DaVinci Truly News Indicator 2.3.98</text>
<rect x="49.4" y="321.8" width="6.4" height="6.4" rx="0.6" fill="#f7e38a" stroke="#c8a440" stroke-width="0.45"/><path d="M52 323.2l1.2 .2-1 2.8" stroke="#806010" stroke-width="0.45" fill="none"/>
<text x="58.05" y="327.09" font-size="5.8" fill="#222" textLength="32.20" lengthAdjust="spacingAndGlyphs" xml:space="preserve" stroke="#222" stroke-width="0.1">Moving Average</text>
<rect x="49.4" y="329.3" width="6.4" height="6.4" rx="0.6" fill="#f7e38a" stroke="#c8a440" stroke-width="0.45"/><path d="M52 330.7l1.2 .2-1 2.8" stroke="#806010" stroke-width="0.45" fill="none"/>
<text x="58.05" y="334.59" font-size="5.8" fill="#222" textLength="32.20" lengthAdjust="spacingAndGlyphs" xml:space="preserve" stroke="#222" stroke-width="0.1">Moving Average</text>
<rect x="49.4" y="336.8" width="6.4" height="6.4" rx="0.6" fill="#f7e38a" stroke="#c8a440" stroke-width="0.45"/><path d="M52 338.2l1.2 .2-1 2.8" stroke="#806010" stroke-width="0.45" fill="none"/>
<text x="58.05" y="342.09" font-size="5.8" fill="#222" textLength="44.20" lengthAdjust="spacingAndGlyphs" xml:space="preserve" stroke="#222" stroke-width="0.1">RSI arrows onchart BT</text>
<rect x="49.4" y="352.0" width="6.4" height="6.4" rx="0.6" fill="#f7e38a" stroke="#c8a440" stroke-width="0.45"/><path d="M52 353.4l1.2 .2-1 2.8" stroke="#806010" stroke-width="0.45" fill="none"/>
<text x="58.05" y="357.29" font-size="5.8" fill="#222" textLength="60.70" lengthAdjust="spacingAndGlyphs" xml:space="preserve" stroke="#222" stroke-width="0.1">rsi of vhf adaptive averages 2</text>
<rect x="33.5" y="345.9" width="3.6" height="3.6" fill="#fafafa" stroke="#9aaec4" stroke-width="0.4"/><path d="M34.2 347.7h2.2" stroke="#333" stroke-width="0.35"/>
<rect x="40.3" y="344.5" width="6.6" height="6.4" rx="0.5" fill="#e4eefa" stroke="#2f6fd0" stroke-width="0.7"/><rect x="40.3" y="344.5" width="6.6" height="1.6" fill="#2f6fd0"/>
<text x="49.50" y="349.89" font-size="5.8" fill="#222" textLength="37.75" lengthAdjust="spacingAndGlyphs" xml:space="preserve" stroke="#222" stroke-width="0.1">Indicator window 1</text>
<rect x="260" y="307" width="34" height="7.300000000000011" rx="1.5" fill="#fdfdfd" stroke="#d0d0d0" stroke-width="0.6"/>
<text x="274.00" y="312.74" font-size="5.8" fill="#222" xml:space="preserve" stroke="#222" stroke-width="0.1">Edit</text>
<rect x="260" y="318" width="34" height="7.600000000000023" rx="1.5" fill="#fdfdfd" stroke="#d0d0d0" stroke-width="0.6"/>
<text x="271.50" y="323.89" font-size="5.8" fill="#222" xml:space="preserve" stroke="#222" stroke-width="0.1">Delete</text>
<rect x="260" y="356" width="34" height="8" rx="1.5" fill="#fdfdfd" stroke="#d0d0d0" stroke-width="0.6"/>
<text x="272.50" y="362.09" font-size="5.8" fill="#222" xml:space="preserve" stroke="#222" stroke-width="0.1">Close</text>
</svg>
<div class="a" style="left:282px;top:264.2px;width:250.8px;height:144px;background:#f9f9f9;border-radius:3px;box-shadow:0 2px 9px rgba(0,0,0,0.4), 0 0 0 0.5px rgba(0,0,0,0.3)"></div>
<svg class="a" style="left:0;top:0" width="800" height="450" viewBox="0 0 800 450">
<path d="M285 264.2H529.8A3 3 0 0 1 532.8 267.2V277.2H282V267.2A3 3 0 0 1 285 264.2z" fill="#ffffff"/>
<text x="285.25" y="272.32" font-size="5.6" fill="#2a2a2a" textLength="89.50" lengthAdjust="spacingAndGlyphs" xml:space="preserve" stroke="#2a2a2a" stroke-width="0.1">Custom Indicator - RSI arrows onchart BT</text>
<text x="503.85" y="272.09" font-size="5.8" fill="#444" textLength="1.90" lengthAdjust="spacingAndGlyphs" xml:space="preserve" stroke="#444" stroke-width="0.1">?</text>
<path d="M521.3 268l4 4M525.3 268l-4 4" stroke="#444" stroke-width="0.55"/>
<rect x="282" y="277.2" width="250.8" height="11.2" fill="#eeeeee"/>
<rect x="282" y="288.2" width="250.8" height="0.5" fill="#dcdcdc"/>
<rect x="285.5" y="280" width="17.5" height="8.3" fill="#f0f0f0" stroke="#dddddd" stroke-width="0.5"/>
<rect x="303.5" y="280" width="20.5" height="8.3" fill="#f0f0f0" stroke="#dddddd" stroke-width="0.5"/>
<rect x="342.5" y="280" width="16.0" height="8.3" fill="#f0f0f0" stroke="#dddddd" stroke-width="0.5"/>
<rect x="359" y="280" width="28" height="8.3" fill="#f0f0f0" stroke="#dddddd" stroke-width="0.5"/>
<rect x="324" y="279.3" width="18.5" height="9.6" fill="#f9f9f9" stroke="#d8d8d8" stroke-width="0.5"/><rect x="324.3" y="288" width="17.9" height="1" fill="#f9f9f9"/>
<text x="287.50" y="286.59" font-size="5.8" fill="#222" textLength="11.05" lengthAdjust="spacingAndGlyphs" xml:space="preserve" stroke="#222" stroke-width="0.1">About</text>
<text x="305.05" y="286.59" font-size="5.8" fill="#222" textLength="16.45" lengthAdjust="spacingAndGlyphs" xml:space="preserve" stroke="#222" stroke-width="0.1">Common</text>
<text x="327.25" y="285.84" font-size="5.8" fill="#222" textLength="11.50" lengthAdjust="spacingAndGlyphs" xml:space="preserve" stroke="#222" stroke-width="0.1">Inputs</text>
<text x="344.50" y="286.59" font-size="5.8" fill="#222" textLength="11.50" lengthAdjust="spacingAndGlyphs" xml:space="preserve" stroke="#222" stroke-width="0.1">Colors</text>
<text x="362.50" y="286.59" font-size="5.8" fill="#222" textLength="23.05" lengthAdjust="spacingAndGlyphs" xml:space="preserve" stroke="#222" stroke-width="0.1">Visualization</text>
<rect x="289.3" y="291.6" width="190.7" height="96.9" fill="#fff" stroke="#c4c6d0" stroke-width="0.6"/>
<text x="292.45" y="299.79" font-size="5.8" fill="#222" textLength="15.55" lengthAdjust="spacingAndGlyphs" xml:space="preserve" stroke="#222" stroke-width="0.1">Variable</text>
<text x="383.50" y="299.79" font-size="5.8" fill="#222" textLength="10.75" lengthAdjust="spacingAndGlyphs" xml:space="preserve" stroke="#222" stroke-width="0.1">Value</text>
<rect x="290.4" y="303.90" width="6.6" height="6.28" rx="1" fill="#3f86d0"/>
<rect x="291.3" y="306.44" width="4.6" height="1.2" fill="#ffffff" opacity="0.7"/>
<text x="299.25" y="309.33" font-size="5.8" fill="#222" textLength="20.50" lengthAdjust="spacingAndGlyphs" xml:space="preserve" stroke="#222" stroke-width="0.1">TimeFrame</text>
<text x="382.25" y="309.33" font-size="5.8" fill="#222" textLength="41.50" lengthAdjust="spacingAndGlyphs" xml:space="preserve" stroke="#222" stroke-width="0.1">First higher time frame</text>
<rect x="289.6" y="311.18" width="181.4" height="8.28" fill="#ebebeb"/>
<rect x="290.4" y="312.18" width="6.6" height="6.28" rx="1" fill="#3f86d0"/>
<rect x="291.3" y="314.72" width="4.6" height="1.2" fill="#ffffff" opacity="0.7"/>
<text x="299.25" y="317.61" font-size="5.8" fill="#222" textLength="21.50" lengthAdjust="spacingAndGlyphs" xml:space="preserve" stroke="#222" stroke-width="0.1">RSI_Period</text>
<text x="382.25" y="317.61" font-size="5.8" fill="#222" textLength="2.00" lengthAdjust="spacingAndGlyphs" xml:space="preserve" stroke="#222" stroke-width="0.1">2</text>
<rect x="290.4" y="320.46" width="6.6" height="6.28" rx="1" fill="#3f86d0"/>
<rect x="291.3" y="323.00" width="4.6" height="1.2" fill="#ffffff" opacity="0.7"/>
<text x="299.25" y="325.89" font-size="5.8" fill="#222" textLength="18.90" lengthAdjust="spacingAndGlyphs" xml:space="preserve" stroke="#222" stroke-width="0.1">RSI_Price</text>
<text x="382.25" y="325.89" font-size="5.8" fill="#222" textLength="10.50" lengthAdjust="spacingAndGlyphs" xml:space="preserve" stroke="#222" stroke-width="0.1">Close</text>
<rect x="289.6" y="327.74" width="181.4" height="8.28" fill="#ebebeb"/>
<rect x="290.4" y="328.74" width="6.6" height="6.28" rx="1" fill="#3f86d0"/>
<rect x="291.3" y="331.28" width="4.6" height="1.2" fill="#ffffff" opacity="0.7"/>
<text x="299.25" y="334.17" font-size="5.8" fill="#222" textLength="20.10" lengthAdjust="spacingAndGlyphs" xml:space="preserve" stroke="#222" stroke-width="0.1">RsiMethod</text>
<text x="382.25" y="334.17" font-size="5.8" fill="#222" textLength="23.50" lengthAdjust="spacingAndGlyphs" xml:space="preserve" stroke="#222" stroke-width="0.1">Regular RSI</text>
<rect x="290.4" y="337.02" width="6.6" height="6.28" rx="1" fill="#5cc6d6"/>
<text x="299.25" y="342.45" font-size="5.8" fill="#222" textLength="18.50" lengthAdjust="spacingAndGlyphs" xml:space="preserve" stroke="#222" stroke-width="0.1">Level_Up</text>
<text x="382.25" y="342.45" font-size="5.8" fill="#222" textLength="8.50" lengthAdjust="spacingAndGlyphs" xml:space="preserve" stroke="#222" stroke-width="0.1">75.0</text>
<rect x="289.6" y="344.3" width="181.4" height="8.28" fill="#ebebeb"/>
<rect x="290.4" y="345.30" width="6.6" height="6.28" rx="1" fill="#5cc6d6"/>
<text x="299.25" y="350.73" font-size="5.8" fill="#222" textLength="18.50" lengthAdjust="spacingAndGlyphs" xml:space="preserve" stroke="#222" stroke-width="0.1">Level_Dn</text>
<text x="382.25" y="350.73" font-size="5.8" fill="#222" textLength="8.50" lengthAdjust="spacingAndGlyphs" xml:space="preserve" stroke="#222" stroke-width="0.1">25.0</text>
<rect x="290.4" y="353.58" width="6.6" height="6.28" rx="1" fill="#3f86d0"/>
<rect x="291.3" y="356.12" width="4.6" height="1.2" fill="#ffffff" opacity="0.7"/>
<text x="299.25" y="359.01" font-size="5.8" fill="#222" textLength="16.90" lengthAdjust="spacingAndGlyphs" xml:space="preserve" stroke="#222" stroke-width="0.1">dcWhats</text>
<text x="382.25" y="359.01" font-size="5.8" fill="#222" textLength="44.50" lengthAdjust="spacingAndGlyphs" xml:space="preserve" stroke="#222" stroke-width="0.1">Signal to oposite signal</text>
<rect x="289.6" y="360.86" width="181.4" height="8.28" fill="#ebebeb"/>
<rect x="290.4" y="361.86" width="6.6" height="6.28" rx="1" fill="#38b048"/>
<path d="M291.3 366.00l1.6-1.8 1.5 1.2 1.6-1.8" stroke="#fff" stroke-width="0.6" fill="none"/>
<text x="299.25" y="367.29" font-size="5.8" fill="#222" textLength="16.10" lengthAdjust="spacingAndGlyphs" xml:space="preserve" stroke="#222" stroke-width="0.1">alertsOn</text>
<text x="382.25" y="367.29" font-size="5.8" fill="#222" textLength="7.10" lengthAdjust="spacingAndGlyphs" xml:space="preserve" stroke="#222" stroke-width="0.1">true</text>
<rect x="290.4" y="370.14" width="6.6" height="6.28" rx="1" fill="#38b048"/>
<path d="M291.3 374.28l1.6-1.8 1.5 1.2 1.6-1.8" stroke="#fff" stroke-width="0.6" fill="none"/>
<text x="299.25" y="375.57" font-size="5.8" fill="#222" textLength="29.50" lengthAdjust="spacingAndGlyphs" xml:space="preserve" stroke="#222" stroke-width="0.1">alertsOnCurrent</text>
<text x="382.25" y="375.57" font-size="5.8" fill="#222" textLength="8.50" lengthAdjust="spacingAndGlyphs" xml:space="preserve" stroke="#222" stroke-width="0.1">false</text>
<rect x="289.6" y="377.42" width="181.4" height="8.28" fill="#ebebeb"/>
<rect x="290.4" y="378.42" width="6.6" height="6.28" rx="1" fill="#38b048"/>
<path d="M291.3 382.56l1.6-1.8 1.5 1.2 1.6-1.8" stroke="#fff" stroke-width="0.6" fill="none"/>
<text x="299.25" y="383.85" font-size="5.8" fill="#222" textLength="27.50" lengthAdjust="spacingAndGlyphs" xml:space="preserve" stroke="#222" stroke-width="0.1">alertsMessage</text>
<text x="382.25" y="383.85" font-size="5.8" fill="#222" textLength="7.10" lengthAdjust="spacingAndGlyphs" xml:space="preserve" stroke="#222" stroke-width="0.1">true</text>
<rect x="290.4" y="386.70" width="6.6" height="1.50" rx="1" fill="#38b048"/>
<path d="M291.3 390.84l1.6-1.8 1.5 1.2 1.6-1.8" stroke="#fff" stroke-width="0.6" fill="none"/>
<rect x="380" y="292" width="0.6" height="96.2" fill="#e2e2e2"/>
<rect x="471" y="292" width="8.7" height="96.2" fill="#f0f0f0"/>
<rect x="475" y="300.6" width="0.9" height="22.8" fill="#858585"/>
<rect x="483" y="366.4" width="42.4" height="8.1" rx="1.5" fill="#fdfdfd" stroke="#d0d0d0" stroke-width="0.6"/>
<text x="497.75" y="372.54" font-size="5.8" fill="#222" textLength="10.50" lengthAdjust="spacingAndGlyphs" xml:space="preserve" stroke="#222" stroke-width="0.1">Load</text>
<rect x="483" y="379.7" width="42.4" height="8.1" rx="1.5" fill="#fdfdfd" stroke="#d0d0d0" stroke-width="0.6"/>
<text x="497.75" y="385.84" font-size="5.8" fill="#222" textLength="10.50" lengthAdjust="spacingAndGlyphs" xml:space="preserve" stroke="#222" stroke-width="0.1">Save</text>
<rect x="431" y="395" width="30.3" height="9" rx="1.5" fill="#fdfdfd" stroke="#4a88d6" stroke-width="0.9"/>
<text x="442.75" y="401.59" font-size="5.8" fill="#222" textLength="6.00" lengthAdjust="spacingAndGlyphs" xml:space="preserve" stroke="#222" stroke-width="0.1">OK</text>
<rect x="465.2" y="395" width="29.8" height="9" rx="1.5" fill="#fdfdfd" stroke="#d0d0d0" stroke-width="0.6"/>
<text x="473.25" y="401.59" font-size="5.8" fill="#222" textLength="13.00" lengthAdjust="spacingAndGlyphs" xml:space="preserve" stroke="#222" stroke-width="0.1">Cancel</text>
<rect x="498.4" y="395" width="30.2" height="9" rx="1.5" fill="#fdfdfd" stroke="#d0d0d0" stroke-width="0.6"/>
<text x="507.25" y="401.59" font-size="5.8" fill="#222" textLength="12.00" lengthAdjust="spacingAndGlyphs" xml:space="preserve" stroke="#222" stroke-width="0.1">Reset</text>
</svg>
</body></html>
